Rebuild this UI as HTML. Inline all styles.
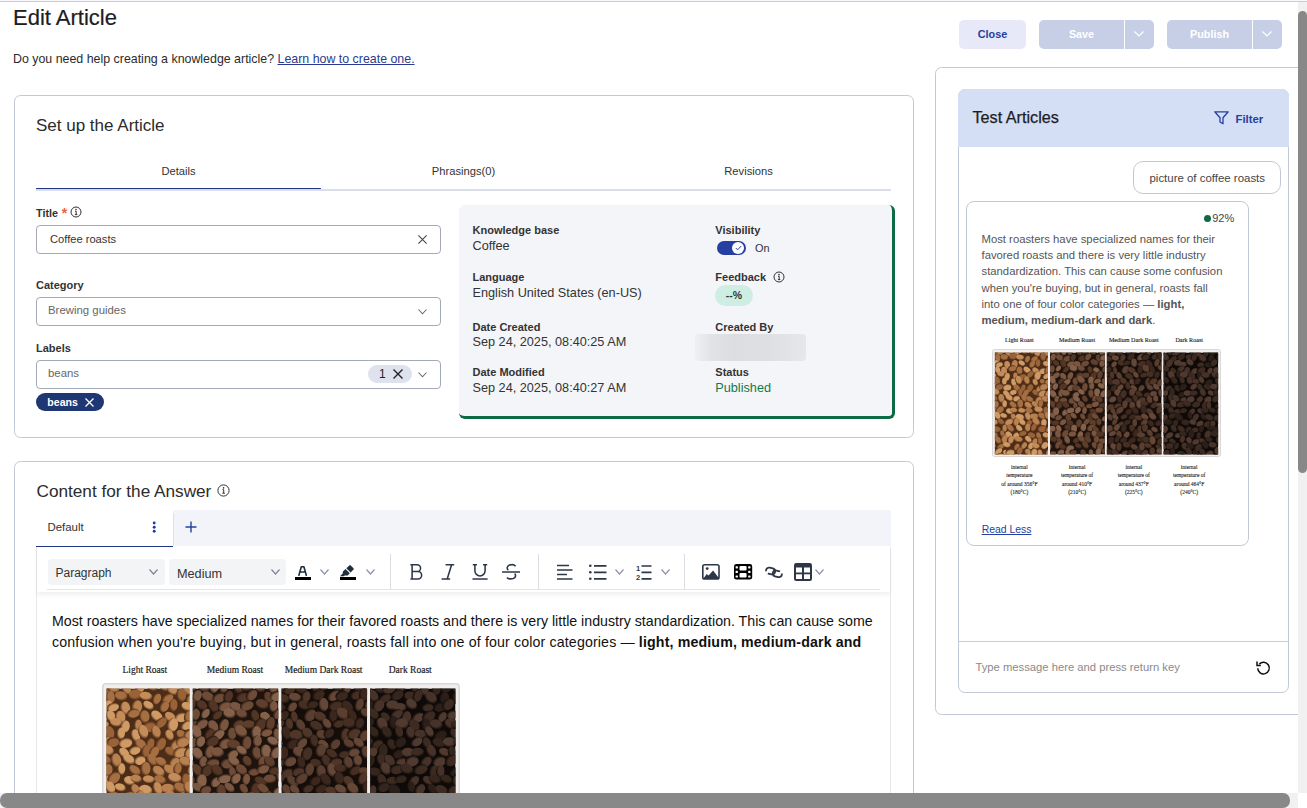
<!DOCTYPE html>
<html><head><meta charset="utf-8">
<style>
*{box-sizing:border-box;margin:0;padding:0}
html,body{width:1307px;height:808px;overflow:hidden;background:#fff;font-family:"Liberation Sans",sans-serif;color:#222}
.a{position:absolute}
.t{position:absolute;line-height:1;white-space:nowrap}
.b{font-weight:bold}
.card{position:absolute;border:1px solid #c3c8d6;border-radius:6.5px;background:#fff}
.inp{position:absolute;border:1px solid #a4a9b6;border-radius:4px;background:#fff}
.btn{position:absolute;top:20px;height:29px;border-radius:5px}
svg{position:absolute;overflow:visible}
</style></head><body>
<svg width="0" height="0" style="position:absolute;left:0;top:0"><defs><g id="coffee"><defs><radialGradient id="gl0" cx="42%" cy="36%" r="64%"><stop offset="0" stop-color="#b8814f"/><stop offset="0.6" stop-color="#b8814f"/><stop offset="1" stop-color="#4e2d18"/></radialGradient><radialGradient id="gl1" cx="42%" cy="36%" r="64%"><stop offset="0" stop-color="#c48c58"/><stop offset="0.6" stop-color="#c48c58"/><stop offset="1" stop-color="#4e2d18"/></radialGradient><radialGradient id="gl2" cx="42%" cy="36%" r="64%"><stop offset="0" stop-color="#a66f41"/><stop offset="0.6" stop-color="#a66f41"/><stop offset="1" stop-color="#4e2d18"/></radialGradient><radialGradient id="gl3" cx="42%" cy="36%" r="64%"><stop offset="0" stop-color="#cf9a64"/><stop offset="0.6" stop-color="#cf9a64"/><stop offset="1" stop-color="#4e2d18"/></radialGradient><radialGradient id="gl4" cx="42%" cy="36%" r="64%"><stop offset="0" stop-color="#996237"/><stop offset="0.6" stop-color="#996237"/><stop offset="1" stop-color="#4e2d18"/></radialGradient><radialGradient id="gm0" cx="42%" cy="36%" r="64%"><stop offset="0" stop-color="#6e4b36"/><stop offset="0.6" stop-color="#6e4b36"/><stop offset="1" stop-color="#1f130d"/></radialGradient><radialGradient id="gm1" cx="42%" cy="36%" r="64%"><stop offset="0" stop-color="#7a5640"/><stop offset="0.6" stop-color="#7a5640"/><stop offset="1" stop-color="#1f130d"/></radialGradient><radialGradient id="gm2" cx="42%" cy="36%" r="64%"><stop offset="0" stop-color="#5f3f2c"/><stop offset="0.6" stop-color="#5f3f2c"/><stop offset="1" stop-color="#1f130d"/></radialGradient><radialGradient id="gm3" cx="42%" cy="36%" r="64%"><stop offset="0" stop-color="#86614a"/><stop offset="0.6" stop-color="#86614a"/><stop offset="1" stop-color="#1f130d"/></radialGradient><radialGradient id="gm4" cx="42%" cy="36%" r="64%"><stop offset="0" stop-color="#523524"/><stop offset="0.6" stop-color="#523524"/><stop offset="1" stop-color="#1f130d"/></radialGradient><radialGradient id="gmd0" cx="42%" cy="36%" r="64%"><stop offset="0" stop-color="#4f3629"/><stop offset="0.6" stop-color="#4f3629"/><stop offset="1" stop-color="#150d09"/></radialGradient><radialGradient id="gmd1" cx="42%" cy="36%" r="64%"><stop offset="0" stop-color="#5a3f31"/><stop offset="0.6" stop-color="#5a3f31"/><stop offset="1" stop-color="#150d09"/></radialGradient><radialGradient id="gmd2" cx="42%" cy="36%" r="64%"><stop offset="0" stop-color="#452e22"/><stop offset="0.6" stop-color="#452e22"/><stop offset="1" stop-color="#150d09"/></radialGradient><radialGradient id="gmd3" cx="42%" cy="36%" r="64%"><stop offset="0" stop-color="#644736"/><stop offset="0.6" stop-color="#644736"/><stop offset="1" stop-color="#150d09"/></radialGradient><radialGradient id="gmd4" cx="42%" cy="36%" r="64%"><stop offset="0" stop-color="#3b271d"/><stop offset="0.6" stop-color="#3b271d"/><stop offset="1" stop-color="#150d09"/></radialGradient><radialGradient id="gd0" cx="42%" cy="36%" r="64%"><stop offset="0" stop-color="#3d2b22"/><stop offset="0.6" stop-color="#3d2b22"/><stop offset="1" stop-color="#0f0a08"/></radialGradient><radialGradient id="gd1" cx="42%" cy="36%" r="64%"><stop offset="0" stop-color="#463228"/><stop offset="0.6" stop-color="#463228"/><stop offset="1" stop-color="#0f0a08"/></radialGradient><radialGradient id="gd2" cx="42%" cy="36%" r="64%"><stop offset="0" stop-color="#34251d"/><stop offset="0.6" stop-color="#34251d"/><stop offset="1" stop-color="#0f0a08"/></radialGradient><radialGradient id="gd3" cx="42%" cy="36%" r="64%"><stop offset="0" stop-color="#50392e"/><stop offset="0.6" stop-color="#50392e"/><stop offset="1" stop-color="#0f0a08"/></radialGradient><radialGradient id="gd4" cx="42%" cy="36%" r="64%"><stop offset="0" stop-color="#2c1f19"/><stop offset="0.6" stop-color="#2c1f19"/><stop offset="1" stop-color="#0f0a08"/></radialGradient></defs><rect x="0.5" y="0.5" width="228" height="107" rx="2" fill="#f0efed" stroke="#d9d8d6" stroke-width="1"/><clipPath id="c0"><rect x="2.8" y="3.5" width="53.2" height="102"/></clipPath><g clip-path="url(#c0)"><rect x="2.8" y="3.5" width="53.2" height="102" fill="#4e2d18"/><ellipse cx="1.7" cy="3.7" rx="4.4" ry="3.5" transform="rotate(166 1.7 3.7)" fill="url(#gl4)"/><ellipse cx="7.0" cy="2.9" rx="4.5" ry="3.4" transform="rotate(40 7.0 2.9)" fill="url(#gl0)"/><ellipse cx="15.6" cy="4.0" rx="4.0" ry="2.7" transform="rotate(63 15.6 4.0)" fill="url(#gl0)"/><ellipse cx="24.3" cy="2.7" rx="3.8" ry="3.0" transform="rotate(99 24.3 2.7)" fill="url(#gl1)"/><ellipse cx="31.8" cy="1.8" rx="4.2" ry="3.0" transform="rotate(33 31.8 1.8)" fill="url(#gl0)"/><ellipse cx="40.0" cy="1.6" rx="4.4" ry="3.5" transform="rotate(42 40.0 1.6)" fill="url(#gl1)"/><ellipse cx="44.9" cy="4.3" rx="4.1" ry="3.1" transform="rotate(52 44.9 4.3)" fill="url(#gl1)"/><ellipse cx="54.7" cy="3.5" rx="4.6" ry="3.6" transform="rotate(76 54.7 3.5)" fill="url(#gl0)"/><ellipse cx="60.0" cy="2.1" rx="3.7" ry="2.5" transform="rotate(77 60.0 2.1)" fill="url(#gl4)"/><ellipse cx="5.3" cy="9.2" rx="4.3" ry="2.9" transform="rotate(90 5.3 9.2)" fill="url(#gl2)"/><ellipse cx="12.3" cy="8.4" rx="4.1" ry="3.1" transform="rotate(14 12.3 8.4)" fill="url(#gl2)"/><ellipse cx="21.5" cy="7.6" rx="4.3" ry="3.4" transform="rotate(4 21.5 7.6)" fill="url(#gl4)"/><ellipse cx="28.2" cy="8.5" rx="4.2" ry="2.8" transform="rotate(11 28.2 8.5)" fill="url(#gl1)"/><ellipse cx="35.0" cy="10.2" rx="3.7" ry="2.6" transform="rotate(118 35.0 10.2)" fill="url(#gl2)"/><ellipse cx="42.0" cy="10.0" rx="3.9" ry="2.8" transform="rotate(150 42.0 10.0)" fill="url(#gl2)"/><ellipse cx="50.7" cy="7.6" rx="4.5" ry="3.1" transform="rotate(87 50.7 7.6)" fill="url(#gl4)"/><ellipse cx="57.2" cy="10.1" rx="3.9" ry="3.1" transform="rotate(139 57.2 10.1)" fill="url(#gl0)"/><ellipse cx="63.5" cy="8.4" rx="3.8" ry="2.5" transform="rotate(38 63.5 8.4)" fill="url(#gl2)"/><ellipse cx="3.1" cy="13.9" rx="3.6" ry="2.9" transform="rotate(136 3.1 13.9)" fill="url(#gl3)"/><ellipse cx="7.0" cy="15.5" rx="3.9" ry="2.7" transform="rotate(166 7.0 15.5)" fill="url(#gl3)"/><ellipse cx="14.8" cy="16.1" rx="4.2" ry="3.3" transform="rotate(85 14.8 16.1)" fill="url(#gl1)"/><ellipse cx="22.2" cy="15.4" rx="4.5" ry="3.4" transform="rotate(105 22.2 15.4)" fill="url(#gl0)"/><ellipse cx="29.7" cy="14.4" rx="3.7" ry="2.6" transform="rotate(36 29.7 14.4)" fill="url(#gl3)"/><ellipse cx="39.8" cy="15.1" rx="3.8" ry="2.8" transform="rotate(124 39.8 15.1)" fill="url(#gl2)"/><ellipse cx="45.6" cy="14.2" rx="4.0" ry="2.7" transform="rotate(96 45.6 14.2)" fill="url(#gl4)"/><ellipse cx="54.8" cy="15.2" rx="4.1" ry="2.9" transform="rotate(22 54.8 15.2)" fill="url(#gl3)"/><ellipse cx="59.7" cy="15.6" rx="4.5" ry="3.2" transform="rotate(91 59.7 15.6)" fill="url(#gl4)"/><ellipse cx="5.6" cy="21.4" rx="4.0" ry="3.0" transform="rotate(71 5.6 21.4)" fill="url(#gl3)"/><ellipse cx="11.6" cy="22.0" rx="4.3" ry="3.4" transform="rotate(87 11.6 22.0)" fill="url(#gl1)"/><ellipse cx="20.1" cy="19.3" rx="4.1" ry="2.9" transform="rotate(171 20.1 19.3)" fill="url(#gl2)"/><ellipse cx="27.1" cy="21.6" rx="4.2" ry="3.3" transform="rotate(89 27.1 21.6)" fill="url(#gl2)"/><ellipse cx="35.1" cy="21.4" rx="4.4" ry="3.1" transform="rotate(44 35.1 21.4)" fill="url(#gl3)"/><ellipse cx="43.7" cy="22.0" rx="4.1" ry="3.0" transform="rotate(42 43.7 22.0)" fill="url(#gl1)"/><ellipse cx="50.6" cy="21.9" rx="4.1" ry="3.1" transform="rotate(171 50.6 21.9)" fill="url(#gl3)"/><ellipse cx="55.6" cy="21.5" rx="4.2" ry="3.1" transform="rotate(107 55.6 21.5)" fill="url(#gl2)"/><ellipse cx="64.6" cy="21.5" rx="4.2" ry="3.2" transform="rotate(7 64.6 21.5)" fill="url(#gl1)"/><ellipse cx="0.1" cy="26.4" rx="4.3" ry="2.9" transform="rotate(175 0.1 26.4)" fill="url(#gl1)"/><ellipse cx="9.2" cy="25.3" rx="4.1" ry="2.8" transform="rotate(13 9.2 25.3)" fill="url(#gl1)"/><ellipse cx="14.7" cy="27.9" rx="4.1" ry="3.0" transform="rotate(106 14.7 27.9)" fill="url(#gl3)"/><ellipse cx="23.0" cy="27.1" rx="3.7" ry="2.5" transform="rotate(95 23.0 27.1)" fill="url(#gl0)"/><ellipse cx="30.4" cy="27.9" rx="4.5" ry="3.5" transform="rotate(176 30.4 27.9)" fill="url(#gl4)"/><ellipse cx="37.8" cy="25.3" rx="4.2" ry="2.8" transform="rotate(139 37.8 25.3)" fill="url(#gl4)"/><ellipse cx="45.1" cy="26.8" rx="4.6" ry="3.5" transform="rotate(107 45.1 26.8)" fill="url(#gl3)"/><ellipse cx="54.2" cy="27.0" rx="4.0" ry="2.7" transform="rotate(152 54.2 27.0)" fill="url(#gl3)"/><ellipse cx="60.7" cy="27.9" rx="4.6" ry="3.4" transform="rotate(89 60.7 27.9)" fill="url(#gl0)"/><ellipse cx="4.6" cy="32.0" rx="4.5" ry="3.3" transform="rotate(83 4.6 32.0)" fill="url(#gl4)"/><ellipse cx="12.0" cy="32.3" rx="3.8" ry="2.7" transform="rotate(97 12.0 32.3)" fill="url(#gl3)"/><ellipse cx="21.5" cy="33.7" rx="4.2" ry="2.9" transform="rotate(77 21.5 33.7)" fill="url(#gl3)"/><ellipse cx="26.3" cy="31.2" rx="4.5" ry="3.2" transform="rotate(73 26.3 31.2)" fill="url(#gl1)"/><ellipse cx="34.5" cy="31.4" rx="4.2" ry="3.0" transform="rotate(75 34.5 31.4)" fill="url(#gl0)"/><ellipse cx="43.0" cy="33.4" rx="3.6" ry="2.7" transform="rotate(70 43.0 33.4)" fill="url(#gl1)"/><ellipse cx="51.0" cy="33.3" rx="3.8" ry="2.7" transform="rotate(39 51.0 33.3)" fill="url(#gl2)"/><ellipse cx="56.1" cy="32.8" rx="4.1" ry="3.1" transform="rotate(154 56.1 32.8)" fill="url(#gl0)"/><ellipse cx="62.5" cy="31.5" rx="3.9" ry="2.9" transform="rotate(157 62.5 31.5)" fill="url(#gl2)"/><ellipse cx="2.1" cy="37.1" rx="3.9" ry="3.0" transform="rotate(151 2.1 37.1)" fill="url(#gl1)"/><ellipse cx="7.0" cy="37.7" rx="4.1" ry="3.2" transform="rotate(175 7.0 37.7)" fill="url(#gl4)"/><ellipse cx="15.0" cy="38.2" rx="4.4" ry="3.3" transform="rotate(176 15.0 38.2)" fill="url(#gl3)"/><ellipse cx="24.8" cy="39.4" rx="4.1" ry="3.1" transform="rotate(50 24.8 39.4)" fill="url(#gl2)"/><ellipse cx="30.8" cy="39.1" rx="3.9" ry="2.6" transform="rotate(110 30.8 39.1)" fill="url(#gl4)"/><ellipse cx="37.5" cy="39.2" rx="4.5" ry="3.1" transform="rotate(122 37.5 39.2)" fill="url(#gl4)"/><ellipse cx="47.1" cy="39.7" rx="4.1" ry="3.0" transform="rotate(138 47.1 39.7)" fill="url(#gl0)"/><ellipse cx="51.5" cy="37.6" rx="4.4" ry="3.4" transform="rotate(169 51.5 37.6)" fill="url(#gl0)"/><ellipse cx="59.9" cy="38.2" rx="3.7" ry="2.6" transform="rotate(124 59.9 38.2)" fill="url(#gl0)"/><ellipse cx="3.6" cy="43.2" rx="4.2" ry="3.3" transform="rotate(28 3.6 43.2)" fill="url(#gl1)"/><ellipse cx="14.2" cy="44.9" rx="4.0" ry="2.8" transform="rotate(47 14.2 44.9)" fill="url(#gl3)"/><ellipse cx="20.9" cy="43.1" rx="3.8" ry="2.8" transform="rotate(169 20.9 43.1)" fill="url(#gl3)"/><ellipse cx="28.1" cy="43.7" rx="4.2" ry="2.8" transform="rotate(102 28.1 43.7)" fill="url(#gl4)"/><ellipse cx="33.3" cy="44.1" rx="3.9" ry="2.9" transform="rotate(125 33.3 44.1)" fill="url(#gl2)"/><ellipse cx="43.6" cy="43.9" rx="3.7" ry="2.8" transform="rotate(38 43.6 43.9)" fill="url(#gl4)"/><ellipse cx="49.9" cy="44.3" rx="4.5" ry="3.3" transform="rotate(158 49.9 44.3)" fill="url(#gl1)"/><ellipse cx="55.9" cy="44.4" rx="3.9" ry="2.9" transform="rotate(132 55.9 44.4)" fill="url(#gl1)"/><ellipse cx="65.3" cy="45.3" rx="4.1" ry="2.9" transform="rotate(33 65.3 45.3)" fill="url(#gl0)"/><ellipse cx="1.9" cy="49.0" rx="4.3" ry="2.9" transform="rotate(31 1.9 49.0)" fill="url(#gl4)"/><ellipse cx="9.0" cy="49.5" rx="4.5" ry="3.3" transform="rotate(82 9.0 49.5)" fill="url(#gl0)"/><ellipse cx="17.2" cy="48.9" rx="4.3" ry="2.9" transform="rotate(38 17.2 48.9)" fill="url(#gl3)"/><ellipse cx="24.2" cy="49.4" rx="3.7" ry="3.0" transform="rotate(170 24.2 49.4)" fill="url(#gl3)"/><ellipse cx="32.1" cy="49.2" rx="4.2" ry="3.0" transform="rotate(60 32.1 49.2)" fill="url(#gl2)"/><ellipse cx="37.7" cy="50.5" rx="3.9" ry="2.8" transform="rotate(34 37.7 50.5)" fill="url(#gl2)"/><ellipse cx="46.2" cy="51.1" rx="4.0" ry="3.1" transform="rotate(132 46.2 51.1)" fill="url(#gl0)"/><ellipse cx="53.4" cy="50.4" rx="4.3" ry="3.1" transform="rotate(24 53.4 50.4)" fill="url(#gl0)"/><ellipse cx="58.8" cy="49.4" rx="3.6" ry="2.9" transform="rotate(123 58.8 49.4)" fill="url(#gl2)"/><ellipse cx="3.2" cy="56.0" rx="4.5" ry="3.4" transform="rotate(109 3.2 56.0)" fill="url(#gl2)"/><ellipse cx="12.3" cy="55.0" rx="3.8" ry="2.6" transform="rotate(95 12.3 55.0)" fill="url(#gl3)"/><ellipse cx="21.1" cy="56.0" rx="4.2" ry="2.8" transform="rotate(41 21.1 56.0)" fill="url(#gl2)"/><ellipse cx="27.8" cy="54.8" rx="4.5" ry="3.2" transform="rotate(94 27.8 54.8)" fill="url(#gl2)"/><ellipse cx="36.2" cy="56.6" rx="4.3" ry="3.1" transform="rotate(39 36.2 56.6)" fill="url(#gl0)"/><ellipse cx="43.0" cy="55.6" rx="4.1" ry="2.8" transform="rotate(41 43.0 55.6)" fill="url(#gl0)"/><ellipse cx="48.3" cy="54.8" rx="3.8" ry="2.6" transform="rotate(102 48.3 54.8)" fill="url(#gl2)"/><ellipse cx="57.4" cy="55.2" rx="4.0" ry="2.7" transform="rotate(119 57.4 55.2)" fill="url(#gl1)"/><ellipse cx="65.2" cy="55.2" rx="3.8" ry="2.5" transform="rotate(155 65.2 55.2)" fill="url(#gl3)"/><ellipse cx="2.1" cy="61.4" rx="4.1" ry="2.9" transform="rotate(174 2.1 61.4)" fill="url(#gl3)"/><ellipse cx="7.5" cy="60.7" rx="4.4" ry="3.4" transform="rotate(144 7.5 60.7)" fill="url(#gl2)"/><ellipse cx="17.7" cy="62.6" rx="3.8" ry="3.0" transform="rotate(23 17.7 62.6)" fill="url(#gl3)"/><ellipse cx="21.9" cy="61.3" rx="3.7" ry="2.6" transform="rotate(15 21.9 61.3)" fill="url(#gl0)"/><ellipse cx="30.0" cy="61.7" rx="3.9" ry="2.6" transform="rotate(9 30.0 61.7)" fill="url(#gl1)"/><ellipse cx="37.1" cy="62.0" rx="4.0" ry="2.9" transform="rotate(21 37.1 62.0)" fill="url(#gl2)"/><ellipse cx="46.7" cy="60.8" rx="4.6" ry="3.1" transform="rotate(19 46.7 60.8)" fill="url(#gl1)"/><ellipse cx="53.5" cy="61.8" rx="4.0" ry="2.8" transform="rotate(96 53.5 61.8)" fill="url(#gl4)"/><ellipse cx="61.0" cy="62.6" rx="4.5" ry="3.2" transform="rotate(114 61.0 62.6)" fill="url(#gl1)"/><ellipse cx="5.2" cy="66.9" rx="4.1" ry="3.1" transform="rotate(67 5.2 66.9)" fill="url(#gl3)"/><ellipse cx="11.7" cy="66.9" rx="3.7" ry="2.6" transform="rotate(21 11.7 66.9)" fill="url(#gl3)"/><ellipse cx="21.5" cy="68.4" rx="3.9" ry="2.8" transform="rotate(63 21.5 68.4)" fill="url(#gl0)"/><ellipse cx="27.9" cy="68.7" rx="4.5" ry="3.5" transform="rotate(18 27.9 68.7)" fill="url(#gl3)"/><ellipse cx="35.6" cy="67.6" rx="4.4" ry="2.9" transform="rotate(73 35.6 67.6)" fill="url(#gl1)"/><ellipse cx="42.3" cy="67.7" rx="4.4" ry="3.3" transform="rotate(4 42.3 67.7)" fill="url(#gl0)"/><ellipse cx="50.1" cy="67.2" rx="4.4" ry="3.1" transform="rotate(33 50.1 67.2)" fill="url(#gl2)"/><ellipse cx="55.2" cy="67.0" rx="3.9" ry="2.9" transform="rotate(73 55.2 67.0)" fill="url(#gl0)"/><ellipse cx="62.6" cy="68.6" rx="4.2" ry="2.8" transform="rotate(12 62.6 68.6)" fill="url(#gl1)"/><ellipse cx="2.5" cy="73.6" rx="3.9" ry="3.1" transform="rotate(4 2.5 73.6)" fill="url(#gl1)"/><ellipse cx="8.8" cy="72.8" rx="3.8" ry="2.7" transform="rotate(41 8.8 72.8)" fill="url(#gl4)"/><ellipse cx="16.5" cy="72.9" rx="4.6" ry="3.2" transform="rotate(155 16.5 72.9)" fill="url(#gl1)"/><ellipse cx="24.0" cy="72.8" rx="4.4" ry="3.1" transform="rotate(109 24.0 72.8)" fill="url(#gl0)"/><ellipse cx="30.3" cy="73.6" rx="3.8" ry="2.8" transform="rotate(43 30.3 73.6)" fill="url(#gl3)"/><ellipse cx="36.7" cy="74.3" rx="3.8" ry="2.7" transform="rotate(125 36.7 74.3)" fill="url(#gl4)"/><ellipse cx="43.9" cy="72.8" rx="4.5" ry="3.4" transform="rotate(53 43.9 72.8)" fill="url(#gl0)"/><ellipse cx="51.4" cy="74.0" rx="4.1" ry="3.2" transform="rotate(100 51.4 74.0)" fill="url(#gl3)"/><ellipse cx="59.5" cy="73.2" rx="3.8" ry="2.8" transform="rotate(91 59.5 73.2)" fill="url(#gl1)"/><ellipse cx="4.5" cy="80.6" rx="4.4" ry="3.3" transform="rotate(15 4.5 80.6)" fill="url(#gl4)"/><ellipse cx="12.4" cy="79.3" rx="3.7" ry="2.6" transform="rotate(97 12.4 79.3)" fill="url(#gl0)"/><ellipse cx="18.3" cy="79.4" rx="4.4" ry="3.0" transform="rotate(51 18.3 79.4)" fill="url(#gl2)"/><ellipse cx="27.1" cy="79.6" rx="4.1" ry="2.8" transform="rotate(50 27.1 79.6)" fill="url(#gl3)"/><ellipse cx="35.3" cy="78.6" rx="4.2" ry="3.1" transform="rotate(99 35.3 78.6)" fill="url(#gl0)"/><ellipse cx="41.3" cy="78.4" rx="3.9" ry="2.8" transform="rotate(121 41.3 78.4)" fill="url(#gl4)"/><ellipse cx="50.1" cy="79.4" rx="4.6" ry="3.5" transform="rotate(177 50.1 79.4)" fill="url(#gl4)"/><ellipse cx="57.4" cy="79.8" rx="4.4" ry="3.1" transform="rotate(151 57.4 79.8)" fill="url(#gl0)"/><ellipse cx="64.8" cy="79.8" rx="3.9" ry="2.6" transform="rotate(22 64.8 79.8)" fill="url(#gl2)"/><ellipse cx="1.7" cy="86.6" rx="4.5" ry="3.3" transform="rotate(3 1.7 86.6)" fill="url(#gl2)"/><ellipse cx="10.2" cy="84.9" rx="3.6" ry="2.4" transform="rotate(76 10.2 84.9)" fill="url(#gl2)"/><ellipse cx="16.8" cy="86.5" rx="4.3" ry="3.2" transform="rotate(53 16.8 86.5)" fill="url(#gl3)"/><ellipse cx="23.6" cy="86.7" rx="3.8" ry="3.1" transform="rotate(139 23.6 86.7)" fill="url(#gl3)"/><ellipse cx="30.5" cy="84.2" rx="4.0" ry="2.7" transform="rotate(167 30.5 84.2)" fill="url(#gl4)"/><ellipse cx="39.7" cy="86.7" rx="4.2" ry="3.0" transform="rotate(27 39.7 86.7)" fill="url(#gl4)"/><ellipse cx="46.4" cy="87.0" rx="3.8" ry="2.6" transform="rotate(75 46.4 87.0)" fill="url(#gl2)"/><ellipse cx="54.2" cy="86.4" rx="3.7" ry="2.9" transform="rotate(19 54.2 86.4)" fill="url(#gl3)"/><ellipse cx="61.5" cy="84.8" rx="3.7" ry="2.7" transform="rotate(163 61.5 84.8)" fill="url(#gl4)"/><ellipse cx="5.8" cy="91.3" rx="4.0" ry="3.0" transform="rotate(62 5.8 91.3)" fill="url(#gl2)"/><ellipse cx="12.1" cy="90.3" rx="4.5" ry="3.2" transform="rotate(107 12.1 90.3)" fill="url(#gl0)"/><ellipse cx="18.5" cy="90.9" rx="4.2" ry="3.1" transform="rotate(111 18.5 90.9)" fill="url(#gl1)"/><ellipse cx="26.6" cy="90.4" rx="4.4" ry="3.1" transform="rotate(19 26.6 90.4)" fill="url(#gl0)"/><ellipse cx="36.2" cy="90.5" rx="4.1" ry="2.8" transform="rotate(48 36.2 90.5)" fill="url(#gl3)"/><ellipse cx="42.5" cy="92.7" rx="3.8" ry="2.9" transform="rotate(122 42.5 92.7)" fill="url(#gl0)"/><ellipse cx="47.6" cy="92.0" rx="3.7" ry="2.6" transform="rotate(94 47.6 92.0)" fill="url(#gl4)"/><ellipse cx="57.7" cy="91.7" rx="4.0" ry="2.8" transform="rotate(46 57.7 91.7)" fill="url(#gl4)"/><ellipse cx="65.8" cy="91.9" rx="4.6" ry="3.1" transform="rotate(26 65.8 91.9)" fill="url(#gl0)"/><ellipse cx="0.2" cy="96.9" rx="3.8" ry="3.0" transform="rotate(21 0.2 96.9)" fill="url(#gl1)"/><ellipse cx="8.4" cy="97.5" rx="4.0" ry="2.7" transform="rotate(152 8.4 97.5)" fill="url(#gl2)"/><ellipse cx="14.8" cy="96.0" rx="4.0" ry="2.8" transform="rotate(18 14.8 96.0)" fill="url(#gl3)"/><ellipse cx="24.4" cy="98.0" rx="3.9" ry="2.6" transform="rotate(122 24.4 98.0)" fill="url(#gl2)"/><ellipse cx="31.8" cy="96.5" rx="3.9" ry="2.7" transform="rotate(127 31.8 96.5)" fill="url(#gl0)"/><ellipse cx="38.6" cy="96.8" rx="3.9" ry="3.1" transform="rotate(132 38.6 96.8)" fill="url(#gl3)"/><ellipse cx="44.1" cy="97.2" rx="3.8" ry="2.9" transform="rotate(18 44.1 97.2)" fill="url(#gl1)"/><ellipse cx="52.3" cy="96.3" rx="4.1" ry="3.3" transform="rotate(138 52.3 96.3)" fill="url(#gl3)"/><ellipse cx="61.8" cy="96.7" rx="4.1" ry="2.7" transform="rotate(21 61.8 96.7)" fill="url(#gl0)"/><ellipse cx="6.1" cy="102.3" rx="4.4" ry="2.9" transform="rotate(143 6.1 102.3)" fill="url(#gl3)"/><ellipse cx="14.0" cy="104.3" rx="3.7" ry="2.9" transform="rotate(49 14.0 104.3)" fill="url(#gl3)"/><ellipse cx="18.0" cy="103.4" rx="4.6" ry="3.4" transform="rotate(175 18.0 103.4)" fill="url(#gl3)"/><ellipse cx="27.2" cy="102.0" rx="4.0" ry="3.1" transform="rotate(111 27.2 102.0)" fill="url(#gl4)"/><ellipse cx="36.2" cy="103.8" rx="4.2" ry="3.1" transform="rotate(55 36.2 103.8)" fill="url(#gl0)"/><ellipse cx="41.7" cy="103.9" rx="4.4" ry="3.4" transform="rotate(110 41.7 103.9)" fill="url(#gl3)"/><ellipse cx="47.7" cy="104.2" rx="3.8" ry="2.7" transform="rotate(77 47.7 104.2)" fill="url(#gl1)"/><ellipse cx="56.5" cy="104.6" rx="4.6" ry="3.2" transform="rotate(107 56.5 104.6)" fill="url(#gl1)"/><ellipse cx="63.4" cy="103.2" rx="3.9" ry="2.9" transform="rotate(31 63.4 103.2)" fill="url(#gl1)"/><ellipse cx="2.2" cy="108.0" rx="4.3" ry="2.9" transform="rotate(104 2.2 108.0)" fill="url(#gl1)"/><ellipse cx="7.6" cy="107.9" rx="4.4" ry="3.5" transform="rotate(153 7.6 107.9)" fill="url(#gl3)"/><ellipse cx="14.8" cy="108.5" rx="4.5" ry="3.6" transform="rotate(7 14.8 108.5)" fill="url(#gl0)"/><ellipse cx="22.4" cy="109.0" rx="3.9" ry="3.0" transform="rotate(95 22.4 109.0)" fill="url(#gl2)"/><ellipse cx="31.9" cy="108.2" rx="4.1" ry="3.3" transform="rotate(179 31.9 108.2)" fill="url(#gl4)"/><ellipse cx="36.8" cy="108.1" rx="4.2" ry="3.0" transform="rotate(94 36.8 108.1)" fill="url(#gl3)"/><ellipse cx="45.9" cy="109.0" rx="4.5" ry="3.6" transform="rotate(35 45.9 109.0)" fill="url(#gl2)"/><ellipse cx="51.4" cy="107.8" rx="4.0" ry="2.8" transform="rotate(170 51.4 107.8)" fill="url(#gl0)"/><ellipse cx="58.7" cy="110.0" rx="4.0" ry="2.9" transform="rotate(156 58.7 110.0)" fill="url(#gl1)"/></g><clipPath id="c1"><rect x="58.0" y="3.5" width="54.9" height="102"/></clipPath><g clip-path="url(#c1)"><rect x="58.0" y="3.5" width="54.9" height="102" fill="#1f130d"/><ellipse cx="57.6" cy="1.8" rx="4.1" ry="2.7" transform="rotate(98 57.6 1.8)" fill="url(#gm2)"/><ellipse cx="64.9" cy="3.2" rx="4.0" ry="2.7" transform="rotate(31 64.9 3.2)" fill="url(#gm2)"/><ellipse cx="71.5" cy="2.4" rx="4.2" ry="3.1" transform="rotate(99 71.5 2.4)" fill="url(#gm3)"/><ellipse cx="78.0" cy="2.1" rx="4.5" ry="3.0" transform="rotate(114 78.0 2.1)" fill="url(#gm0)"/><ellipse cx="87.0" cy="3.1" rx="4.0" ry="3.1" transform="rotate(76 87.0 3.1)" fill="url(#gm4)"/><ellipse cx="93.0" cy="2.7" rx="4.1" ry="2.7" transform="rotate(0 93.0 2.7)" fill="url(#gm4)"/><ellipse cx="101.1" cy="3.2" rx="3.6" ry="2.8" transform="rotate(29 101.1 3.2)" fill="url(#gm2)"/><ellipse cx="109.7" cy="2.6" rx="3.9" ry="3.1" transform="rotate(123 109.7 2.6)" fill="url(#gm1)"/><ellipse cx="116.6" cy="2.3" rx="4.4" ry="3.3" transform="rotate(99 116.6 2.3)" fill="url(#gm1)"/><ellipse cx="60.7" cy="8.2" rx="3.9" ry="3.0" transform="rotate(112 60.7 8.2)" fill="url(#gm1)"/><ellipse cx="67.9" cy="9.1" rx="4.5" ry="3.2" transform="rotate(31 67.9 9.1)" fill="url(#gm0)"/><ellipse cx="74.8" cy="9.4" rx="4.2" ry="3.2" transform="rotate(166 74.8 9.4)" fill="url(#gm0)"/><ellipse cx="80.7" cy="8.7" rx="4.0" ry="2.9" transform="rotate(113 80.7 8.7)" fill="url(#gm4)"/><ellipse cx="90.1" cy="9.0" rx="4.3" ry="3.3" transform="rotate(175 90.1 9.0)" fill="url(#gm4)"/><ellipse cx="95.7" cy="7.7" rx="4.1" ry="3.0" transform="rotate(138 95.7 7.7)" fill="url(#gm0)"/><ellipse cx="106.2" cy="9.4" rx="3.9" ry="2.8" transform="rotate(78 106.2 9.4)" fill="url(#gm2)"/><ellipse cx="111.8" cy="8.3" rx="4.5" ry="3.2" transform="rotate(168 111.8 8.3)" fill="url(#gm3)"/><ellipse cx="119.3" cy="7.9" rx="3.8" ry="2.7" transform="rotate(156 119.3 7.9)" fill="url(#gm1)"/><ellipse cx="56.3" cy="13.8" rx="4.6" ry="3.4" transform="rotate(112 56.3 13.8)" fill="url(#gm4)"/><ellipse cx="64.0" cy="14.5" rx="3.8" ry="3.0" transform="rotate(43 64.0 14.5)" fill="url(#gm4)"/><ellipse cx="71.1" cy="15.0" rx="4.5" ry="3.1" transform="rotate(68 71.1 15.0)" fill="url(#gm4)"/><ellipse cx="78.7" cy="14.9" rx="4.5" ry="3.3" transform="rotate(169 78.7 14.9)" fill="url(#gm1)"/><ellipse cx="85.8" cy="15.6" rx="4.4" ry="3.1" transform="rotate(27 85.8 15.6)" fill="url(#gm1)"/><ellipse cx="92.6" cy="14.4" rx="4.5" ry="3.1" transform="rotate(161 92.6 14.4)" fill="url(#gm0)"/><ellipse cx="102.5" cy="13.7" rx="4.4" ry="3.1" transform="rotate(26 102.5 13.7)" fill="url(#gm2)"/><ellipse cx="109.5" cy="15.0" rx="3.6" ry="2.9" transform="rotate(98 109.5 15.0)" fill="url(#gm1)"/><ellipse cx="116.2" cy="15.4" rx="3.9" ry="2.8" transform="rotate(84 116.2 15.4)" fill="url(#gm0)"/><ellipse cx="59.5" cy="20.1" rx="3.9" ry="3.1" transform="rotate(104 59.5 20.1)" fill="url(#gm0)"/><ellipse cx="66.0" cy="19.5" rx="3.6" ry="2.5" transform="rotate(129 66.0 19.5)" fill="url(#gm3)"/><ellipse cx="73.6" cy="20.5" rx="3.8" ry="2.5" transform="rotate(144 73.6 20.5)" fill="url(#gm4)"/><ellipse cx="81.6" cy="19.6" rx="4.1" ry="3.3" transform="rotate(19 81.6 19.6)" fill="url(#gm3)"/><ellipse cx="89.4" cy="19.8" rx="3.8" ry="2.9" transform="rotate(24 89.4 19.8)" fill="url(#gm0)"/><ellipse cx="97.8" cy="21.2" rx="4.0" ry="2.7" transform="rotate(78 97.8 21.2)" fill="url(#gm4)"/><ellipse cx="104.4" cy="21.6" rx="3.6" ry="2.9" transform="rotate(34 104.4 21.6)" fill="url(#gm3)"/><ellipse cx="112.6" cy="19.8" rx="3.8" ry="3.0" transform="rotate(135 112.6 19.8)" fill="url(#gm0)"/><ellipse cx="118.1" cy="19.5" rx="4.5" ry="3.3" transform="rotate(113 118.1 19.5)" fill="url(#gm4)"/><ellipse cx="58.0" cy="26.8" rx="4.1" ry="2.9" transform="rotate(160 58.0 26.8)" fill="url(#gm2)"/><ellipse cx="63.7" cy="26.3" rx="4.3" ry="2.9" transform="rotate(152 63.7 26.3)" fill="url(#gm1)"/><ellipse cx="71.1" cy="27.9" rx="4.4" ry="3.2" transform="rotate(59 71.1 27.9)" fill="url(#gm1)"/><ellipse cx="77.8" cy="27.0" rx="4.3" ry="3.0" transform="rotate(118 77.8 27.0)" fill="url(#gm1)"/><ellipse cx="87.2" cy="26.5" rx="3.9" ry="3.1" transform="rotate(160 87.2 26.5)" fill="url(#gm2)"/><ellipse cx="94.2" cy="26.7" rx="4.2" ry="2.9" transform="rotate(6 94.2 26.7)" fill="url(#gm2)"/><ellipse cx="101.2" cy="26.5" rx="4.4" ry="3.5" transform="rotate(133 101.2 26.5)" fill="url(#gm4)"/><ellipse cx="107.5" cy="26.1" rx="4.5" ry="3.0" transform="rotate(107 107.5 26.1)" fill="url(#gm2)"/><ellipse cx="115.4" cy="27.9" rx="3.7" ry="2.8" transform="rotate(8 115.4 27.9)" fill="url(#gm0)"/><ellipse cx="60.2" cy="31.5" rx="4.6" ry="3.3" transform="rotate(72 60.2 31.5)" fill="url(#gm3)"/><ellipse cx="68.8" cy="32.8" rx="4.1" ry="3.2" transform="rotate(134 68.8 32.8)" fill="url(#gm4)"/><ellipse cx="74.4" cy="33.0" rx="4.4" ry="2.9" transform="rotate(147 74.4 33.0)" fill="url(#gm3)"/><ellipse cx="82.9" cy="32.6" rx="4.1" ry="3.0" transform="rotate(95 82.9 32.6)" fill="url(#gm0)"/><ellipse cx="88.8" cy="31.1" rx="4.6" ry="3.5" transform="rotate(43 88.8 31.1)" fill="url(#gm1)"/><ellipse cx="98.5" cy="31.8" rx="4.4" ry="3.3" transform="rotate(98 98.5 31.8)" fill="url(#gm3)"/><ellipse cx="105.1" cy="31.7" rx="3.9" ry="2.6" transform="rotate(168 105.1 31.7)" fill="url(#gm1)"/><ellipse cx="112.3" cy="33.2" rx="4.1" ry="3.0" transform="rotate(78 112.3 33.2)" fill="url(#gm1)"/><ellipse cx="120.2" cy="32.1" rx="4.2" ry="3.2" transform="rotate(113 120.2 32.1)" fill="url(#gm0)"/><ellipse cx="57.9" cy="38.5" rx="3.6" ry="2.6" transform="rotate(118 57.9 38.5)" fill="url(#gm0)"/><ellipse cx="62.8" cy="37.5" rx="3.8" ry="3.0" transform="rotate(120 62.8 37.5)" fill="url(#gm3)"/><ellipse cx="70.5" cy="37.2" rx="4.4" ry="3.3" transform="rotate(156 70.5 37.2)" fill="url(#gm4)"/><ellipse cx="78.6" cy="38.7" rx="4.2" ry="3.3" transform="rotate(158 78.6 38.7)" fill="url(#gm1)"/><ellipse cx="84.4" cy="39.5" rx="4.6" ry="3.2" transform="rotate(16 84.4 39.5)" fill="url(#gm2)"/><ellipse cx="92.4" cy="38.5" rx="4.5" ry="3.1" transform="rotate(101 92.4 38.5)" fill="url(#gm0)"/><ellipse cx="99.2" cy="37.2" rx="3.8" ry="3.0" transform="rotate(100 99.2 37.2)" fill="url(#gm1)"/><ellipse cx="109.3" cy="37.3" rx="4.0" ry="2.7" transform="rotate(33 109.3 37.3)" fill="url(#gm3)"/><ellipse cx="117.1" cy="37.4" rx="4.6" ry="3.2" transform="rotate(134 117.1 37.4)" fill="url(#gm1)"/><ellipse cx="60.9" cy="45.3" rx="4.3" ry="3.3" transform="rotate(59 60.9 45.3)" fill="url(#gm3)"/><ellipse cx="68.7" cy="44.1" rx="4.3" ry="3.2" transform="rotate(113 68.7 44.1)" fill="url(#gm1)"/><ellipse cx="73.9" cy="44.5" rx="4.3" ry="3.4" transform="rotate(11 73.9 44.5)" fill="url(#gm1)"/><ellipse cx="83.6" cy="45.6" rx="3.8" ry="2.8" transform="rotate(155 83.6 45.6)" fill="url(#gm3)"/><ellipse cx="89.3" cy="43.3" rx="3.9" ry="2.6" transform="rotate(38 89.3 43.3)" fill="url(#gm3)"/><ellipse cx="98.8" cy="45.0" rx="4.3" ry="3.1" transform="rotate(83 98.8 45.0)" fill="url(#gm0)"/><ellipse cx="104.6" cy="43.9" rx="4.6" ry="3.5" transform="rotate(94 104.6 43.9)" fill="url(#gm3)"/><ellipse cx="111.2" cy="44.5" rx="4.5" ry="3.2" transform="rotate(137 111.2 44.5)" fill="url(#gm3)"/><ellipse cx="118.2" cy="44.1" rx="4.0" ry="3.1" transform="rotate(58 118.2 44.1)" fill="url(#gm3)"/><ellipse cx="55.8" cy="51.1" rx="3.7" ry="2.7" transform="rotate(56 55.8 51.1)" fill="url(#gm0)"/><ellipse cx="64.5" cy="50.5" rx="3.7" ry="2.8" transform="rotate(104 64.5 50.5)" fill="url(#gm1)"/><ellipse cx="70.7" cy="51.2" rx="4.4" ry="3.1" transform="rotate(173 70.7 51.2)" fill="url(#gm0)"/><ellipse cx="80.2" cy="51.3" rx="4.4" ry="3.4" transform="rotate(174 80.2 51.3)" fill="url(#gm0)"/><ellipse cx="84.4" cy="50.2" rx="4.1" ry="2.9" transform="rotate(38 84.4 50.2)" fill="url(#gm3)"/><ellipse cx="92.7" cy="50.1" rx="3.7" ry="2.8" transform="rotate(62 92.7 50.1)" fill="url(#gm2)"/><ellipse cx="102.1" cy="50.5" rx="3.7" ry="2.6" transform="rotate(105 102.1 50.5)" fill="url(#gm0)"/><ellipse cx="107.1" cy="50.6" rx="4.0" ry="3.2" transform="rotate(53 107.1 50.6)" fill="url(#gm2)"/><ellipse cx="116.4" cy="50.1" rx="3.7" ry="2.9" transform="rotate(83 116.4 50.1)" fill="url(#gm0)"/><ellipse cx="60.9" cy="56.0" rx="4.5" ry="3.0" transform="rotate(58 60.9 56.0)" fill="url(#gm2)"/><ellipse cx="66.9" cy="56.0" rx="4.5" ry="3.3" transform="rotate(131 66.9 56.0)" fill="url(#gm4)"/><ellipse cx="73.5" cy="56.1" rx="4.5" ry="3.2" transform="rotate(50 73.5 56.1)" fill="url(#gm4)"/><ellipse cx="83.2" cy="57.3" rx="3.7" ry="2.5" transform="rotate(82 83.2 57.3)" fill="url(#gm0)"/><ellipse cx="89.1" cy="55.7" rx="4.2" ry="3.1" transform="rotate(44 89.1 55.7)" fill="url(#gm0)"/><ellipse cx="97.0" cy="56.8" rx="3.6" ry="2.5" transform="rotate(179 97.0 56.8)" fill="url(#gm0)"/><ellipse cx="103.0" cy="54.9" rx="4.2" ry="3.0" transform="rotate(168 103.0 54.9)" fill="url(#gm1)"/><ellipse cx="110.3" cy="56.0" rx="3.8" ry="2.7" transform="rotate(177 110.3 56.0)" fill="url(#gm4)"/><ellipse cx="119.6" cy="55.8" rx="4.1" ry="2.9" transform="rotate(9 119.6 55.8)" fill="url(#gm1)"/><ellipse cx="56.0" cy="63.4" rx="4.4" ry="3.0" transform="rotate(112 56.0 63.4)" fill="url(#gm2)"/><ellipse cx="63.4" cy="62.8" rx="4.5" ry="3.6" transform="rotate(99 63.4 62.8)" fill="url(#gm3)"/><ellipse cx="72.6" cy="63.4" rx="3.7" ry="2.9" transform="rotate(138 72.6 63.4)" fill="url(#gm3)"/><ellipse cx="78.2" cy="61.1" rx="4.6" ry="3.0" transform="rotate(174 78.2 61.1)" fill="url(#gm3)"/><ellipse cx="85.4" cy="61.1" rx="3.8" ry="3.0" transform="rotate(132 85.4 61.1)" fill="url(#gm3)"/><ellipse cx="92.1" cy="61.7" rx="3.8" ry="2.6" transform="rotate(103 92.1 61.7)" fill="url(#gm1)"/><ellipse cx="101.6" cy="63.1" rx="4.3" ry="2.8" transform="rotate(29 101.6 63.1)" fill="url(#gm4)"/><ellipse cx="107.6" cy="61.5" rx="4.2" ry="2.9" transform="rotate(3 107.6 61.5)" fill="url(#gm0)"/><ellipse cx="114.6" cy="60.7" rx="4.1" ry="2.8" transform="rotate(57 114.6 60.7)" fill="url(#gm2)"/><ellipse cx="61.2" cy="67.1" rx="4.1" ry="2.7" transform="rotate(31 61.2 67.1)" fill="url(#gm1)"/><ellipse cx="66.2" cy="68.4" rx="3.7" ry="2.9" transform="rotate(162 66.2 68.4)" fill="url(#gm0)"/><ellipse cx="76.0" cy="69.0" rx="4.2" ry="3.3" transform="rotate(89 76.0 69.0)" fill="url(#gm2)"/><ellipse cx="81.5" cy="67.0" rx="3.9" ry="2.6" transform="rotate(44 81.5 67.0)" fill="url(#gm1)"/><ellipse cx="90.6" cy="67.9" rx="3.6" ry="2.5" transform="rotate(59 90.6 67.9)" fill="url(#gm0)"/><ellipse cx="98.0" cy="68.5" rx="4.5" ry="3.3" transform="rotate(98 98.0 68.5)" fill="url(#gm4)"/><ellipse cx="103.1" cy="67.9" rx="4.3" ry="2.8" transform="rotate(37 103.1 67.9)" fill="url(#gm0)"/><ellipse cx="112.9" cy="69.1" rx="3.9" ry="2.7" transform="rotate(157 112.9 69.1)" fill="url(#gm3)"/><ellipse cx="117.6" cy="68.5" rx="3.6" ry="2.9" transform="rotate(133 117.6 68.5)" fill="url(#gm3)"/><ellipse cx="56.0" cy="73.1" rx="3.8" ry="3.0" transform="rotate(149 56.0 73.1)" fill="url(#gm2)"/><ellipse cx="63.7" cy="74.3" rx="4.2" ry="2.9" transform="rotate(1 63.7 74.3)" fill="url(#gm4)"/><ellipse cx="70.6" cy="73.0" rx="3.8" ry="2.9" transform="rotate(149 70.6 73.0)" fill="url(#gm1)"/><ellipse cx="77.9" cy="74.4" rx="3.8" ry="3.0" transform="rotate(30 77.9 74.4)" fill="url(#gm4)"/><ellipse cx="86.4" cy="74.4" rx="4.3" ry="3.2" transform="rotate(112 86.4 74.4)" fill="url(#gm2)"/><ellipse cx="94.2" cy="72.6" rx="3.8" ry="2.7" transform="rotate(139 94.2 72.6)" fill="url(#gm0)"/><ellipse cx="101.5" cy="74.2" rx="4.2" ry="3.3" transform="rotate(3 101.5 74.2)" fill="url(#gm2)"/><ellipse cx="106.5" cy="72.9" rx="3.8" ry="2.9" transform="rotate(97 106.5 72.9)" fill="url(#gm2)"/><ellipse cx="116.9" cy="74.8" rx="4.2" ry="3.0" transform="rotate(49 116.9 74.8)" fill="url(#gm3)"/><ellipse cx="60.4" cy="80.1" rx="4.3" ry="3.2" transform="rotate(5 60.4 80.1)" fill="url(#gm3)"/><ellipse cx="66.5" cy="79.8" rx="3.8" ry="2.9" transform="rotate(70 66.5 79.8)" fill="url(#gm3)"/><ellipse cx="76.2" cy="79.1" rx="4.2" ry="3.0" transform="rotate(28 76.2 79.1)" fill="url(#gm4)"/><ellipse cx="81.5" cy="80.0" rx="4.5" ry="3.5" transform="rotate(96 81.5 80.0)" fill="url(#gm3)"/><ellipse cx="90.9" cy="78.5" rx="4.0" ry="3.2" transform="rotate(103 90.9 78.5)" fill="url(#gm3)"/><ellipse cx="98.8" cy="78.5" rx="4.6" ry="3.3" transform="rotate(153 98.8 78.5)" fill="url(#gm0)"/><ellipse cx="103.5" cy="80.5" rx="3.9" ry="2.8" transform="rotate(44 103.5 80.5)" fill="url(#gm2)"/><ellipse cx="111.8" cy="80.6" rx="4.3" ry="2.9" transform="rotate(98 111.8 80.6)" fill="url(#gm1)"/><ellipse cx="119.6" cy="80.5" rx="4.3" ry="3.0" transform="rotate(58 119.6 80.5)" fill="url(#gm3)"/><ellipse cx="56.5" cy="85.7" rx="4.3" ry="3.3" transform="rotate(119 56.5 85.7)" fill="url(#gm3)"/><ellipse cx="65.5" cy="85.4" rx="4.2" ry="3.3" transform="rotate(82 65.5 85.4)" fill="url(#gm1)"/><ellipse cx="72.9" cy="84.4" rx="4.4" ry="3.3" transform="rotate(138 72.9 84.4)" fill="url(#gm0)"/><ellipse cx="80.0" cy="84.6" rx="4.1" ry="3.0" transform="rotate(178 80.0 84.6)" fill="url(#gm1)"/><ellipse cx="87.8" cy="86.4" rx="4.4" ry="3.0" transform="rotate(109 87.8 86.4)" fill="url(#gm3)"/><ellipse cx="95.0" cy="86.8" rx="4.4" ry="3.1" transform="rotate(111 95.0 86.8)" fill="url(#gm4)"/><ellipse cx="102.7" cy="85.7" rx="4.4" ry="3.1" transform="rotate(57 102.7 85.7)" fill="url(#gm1)"/><ellipse cx="108.3" cy="85.6" rx="4.3" ry="3.1" transform="rotate(12 108.3 85.6)" fill="url(#gm4)"/><ellipse cx="115.0" cy="85.6" rx="3.6" ry="2.5" transform="rotate(64 115.0 85.6)" fill="url(#gm2)"/><ellipse cx="61.9" cy="90.7" rx="4.3" ry="3.1" transform="rotate(17 61.9 90.7)" fill="url(#gm4)"/><ellipse cx="67.6" cy="92.7" rx="3.8" ry="2.8" transform="rotate(55 67.6 92.7)" fill="url(#gm2)"/><ellipse cx="74.8" cy="91.0" rx="4.4" ry="3.0" transform="rotate(73 74.8 91.0)" fill="url(#gm1)"/><ellipse cx="84.0" cy="91.1" rx="3.8" ry="2.7" transform="rotate(161 84.0 91.1)" fill="url(#gm4)"/><ellipse cx="89.7" cy="90.4" rx="4.1" ry="2.9" transform="rotate(36 89.7 90.4)" fill="url(#gm0)"/><ellipse cx="95.8" cy="90.9" rx="3.7" ry="3.0" transform="rotate(56 95.8 90.9)" fill="url(#gm2)"/><ellipse cx="104.0" cy="90.6" rx="4.0" ry="3.0" transform="rotate(98 104.0 90.6)" fill="url(#gm0)"/><ellipse cx="110.6" cy="92.4" rx="4.1" ry="2.9" transform="rotate(22 110.6 92.4)" fill="url(#gm0)"/><ellipse cx="117.6" cy="91.0" rx="4.1" ry="3.2" transform="rotate(160 117.6 91.0)" fill="url(#gm1)"/><ellipse cx="56.0" cy="98.7" rx="4.5" ry="3.1" transform="rotate(111 56.0 98.7)" fill="url(#gm3)"/><ellipse cx="65.6" cy="96.0" rx="4.1" ry="3.1" transform="rotate(121 65.6 96.0)" fill="url(#gm0)"/><ellipse cx="70.6" cy="98.2" rx="3.8" ry="2.8" transform="rotate(26 70.6 98.2)" fill="url(#gm4)"/><ellipse cx="77.8" cy="98.8" rx="4.2" ry="3.1" transform="rotate(172 77.8 98.8)" fill="url(#gm3)"/><ellipse cx="86.2" cy="97.0" rx="3.7" ry="2.5" transform="rotate(30 86.2 97.0)" fill="url(#gm4)"/><ellipse cx="93.2" cy="96.0" rx="4.3" ry="3.0" transform="rotate(59 93.2 96.0)" fill="url(#gm2)"/><ellipse cx="102.4" cy="96.7" rx="3.8" ry="2.8" transform="rotate(64 102.4 96.7)" fill="url(#gm0)"/><ellipse cx="107.5" cy="97.7" rx="4.6" ry="3.4" transform="rotate(110 107.5 97.7)" fill="url(#gm0)"/><ellipse cx="116.3" cy="97.3" rx="3.7" ry="2.5" transform="rotate(59 116.3 97.3)" fill="url(#gm3)"/><ellipse cx="60.3" cy="104.3" rx="3.8" ry="2.7" transform="rotate(175 60.3 104.3)" fill="url(#gm0)"/><ellipse cx="68.6" cy="103.1" rx="3.8" ry="3.0" transform="rotate(165 68.6 103.1)" fill="url(#gm3)"/><ellipse cx="75.3" cy="104.3" rx="4.0" ry="2.8" transform="rotate(92 75.3 104.3)" fill="url(#gm3)"/><ellipse cx="81.0" cy="103.2" rx="3.7" ry="2.7" transform="rotate(171 81.0 103.2)" fill="url(#gm2)"/><ellipse cx="91.0" cy="104.5" rx="4.3" ry="2.9" transform="rotate(71 91.0 104.5)" fill="url(#gm2)"/><ellipse cx="98.7" cy="103.8" rx="3.6" ry="2.6" transform="rotate(88 98.7 103.8)" fill="url(#gm1)"/><ellipse cx="105.9" cy="103.0" rx="4.0" ry="3.0" transform="rotate(107 105.9 103.0)" fill="url(#gm3)"/><ellipse cx="113.2" cy="102.5" rx="3.8" ry="2.9" transform="rotate(7 113.2 102.5)" fill="url(#gm2)"/><ellipse cx="120.8" cy="102.2" rx="3.8" ry="2.9" transform="rotate(134 120.8 102.2)" fill="url(#gm4)"/><ellipse cx="57.9" cy="109.7" rx="3.7" ry="3.0" transform="rotate(94 57.9 109.7)" fill="url(#gm1)"/><ellipse cx="63.5" cy="109.4" rx="4.0" ry="2.8" transform="rotate(58 63.5 109.4)" fill="url(#gm2)"/><ellipse cx="70.1" cy="108.7" rx="4.4" ry="3.1" transform="rotate(83 70.1 108.7)" fill="url(#gm1)"/><ellipse cx="77.7" cy="110.3" rx="4.5" ry="3.4" transform="rotate(83 77.7 110.3)" fill="url(#gm1)"/><ellipse cx="84.6" cy="109.2" rx="4.6" ry="3.1" transform="rotate(37 84.6 109.2)" fill="url(#gm4)"/><ellipse cx="92.9" cy="109.8" rx="4.4" ry="3.0" transform="rotate(50 92.9 109.8)" fill="url(#gm3)"/><ellipse cx="100.7" cy="110.0" rx="4.5" ry="3.4" transform="rotate(150 100.7 110.0)" fill="url(#gm0)"/><ellipse cx="109.3" cy="109.8" rx="3.8" ry="2.7" transform="rotate(40 109.3 109.8)" fill="url(#gm4)"/><ellipse cx="114.0" cy="109.7" rx="3.9" ry="2.7" transform="rotate(6 114.0 109.7)" fill="url(#gm0)"/></g><clipPath id="c2"><rect x="114.8" y="3.5" width="54.8" height="102"/></clipPath><g clip-path="url(#c2)"><rect x="114.8" y="3.5" width="54.8" height="102" fill="#150d09"/><ellipse cx="114.6" cy="3.2" rx="4.5" ry="3.4" transform="rotate(29 114.6 3.2)" fill="url(#gmd4)"/><ellipse cx="119.7" cy="4.4" rx="3.8" ry="2.8" transform="rotate(164 119.7 4.4)" fill="url(#gmd2)"/><ellipse cx="127.3" cy="4.1" rx="4.2" ry="3.2" transform="rotate(35 127.3 4.1)" fill="url(#gmd4)"/><ellipse cx="136.7" cy="2.4" rx="4.2" ry="3.2" transform="rotate(82 136.7 2.4)" fill="url(#gmd2)"/><ellipse cx="142.2" cy="1.7" rx="3.9" ry="2.8" transform="rotate(155 142.2 1.7)" fill="url(#gmd4)"/><ellipse cx="151.3" cy="2.3" rx="4.4" ry="3.4" transform="rotate(21 151.3 2.3)" fill="url(#gmd4)"/><ellipse cx="156.3" cy="2.7" rx="4.2" ry="2.9" transform="rotate(92 156.3 2.7)" fill="url(#gmd1)"/><ellipse cx="165.1" cy="2.8" rx="4.1" ry="2.9" transform="rotate(168 165.1 2.8)" fill="url(#gmd4)"/><ellipse cx="171.6" cy="4.0" rx="4.6" ry="3.5" transform="rotate(161 171.6 4.0)" fill="url(#gmd4)"/><ellipse cx="115.9" cy="10.2" rx="4.3" ry="3.1" transform="rotate(17 115.9 10.2)" fill="url(#gmd2)"/><ellipse cx="123.6" cy="9.3" rx="4.2" ry="2.9" transform="rotate(13 123.6 9.3)" fill="url(#gmd3)"/><ellipse cx="130.4" cy="8.8" rx="3.7" ry="2.9" transform="rotate(112 130.4 8.8)" fill="url(#gmd0)"/><ellipse cx="138.4" cy="7.5" rx="4.2" ry="3.2" transform="rotate(150 138.4 7.5)" fill="url(#gmd4)"/><ellipse cx="148.3" cy="8.1" rx="4.3" ry="3.1" transform="rotate(148 148.3 8.1)" fill="url(#gmd3)"/><ellipse cx="153.3" cy="8.1" rx="4.1" ry="3.1" transform="rotate(166 153.3 8.1)" fill="url(#gmd4)"/><ellipse cx="162.6" cy="7.6" rx="3.7" ry="2.9" transform="rotate(161 162.6 7.6)" fill="url(#gmd2)"/><ellipse cx="167.5" cy="7.6" rx="4.4" ry="3.1" transform="rotate(91 167.5 7.6)" fill="url(#gmd4)"/><ellipse cx="176.9" cy="9.3" rx="4.1" ry="3.2" transform="rotate(83 176.9 9.3)" fill="url(#gmd2)"/><ellipse cx="113.2" cy="16.0" rx="4.6" ry="3.1" transform="rotate(6 113.2 16.0)" fill="url(#gmd4)"/><ellipse cx="121.6" cy="15.3" rx="3.6" ry="2.7" transform="rotate(136 121.6 15.3)" fill="url(#gmd3)"/><ellipse cx="129.7" cy="14.3" rx="4.3" ry="3.2" transform="rotate(20 129.7 14.3)" fill="url(#gmd2)"/><ellipse cx="134.7" cy="13.6" rx="3.7" ry="2.5" transform="rotate(172 134.7 13.6)" fill="url(#gmd4)"/><ellipse cx="141.6" cy="13.9" rx="4.5" ry="3.3" transform="rotate(88 141.6 13.9)" fill="url(#gmd3)"/><ellipse cx="149.4" cy="14.4" rx="4.6" ry="3.1" transform="rotate(169 149.4 14.4)" fill="url(#gmd2)"/><ellipse cx="156.9" cy="15.4" rx="4.5" ry="3.3" transform="rotate(56 156.9 15.4)" fill="url(#gmd4)"/><ellipse cx="164.5" cy="13.8" rx="4.2" ry="2.8" transform="rotate(112 164.5 13.8)" fill="url(#gmd1)"/><ellipse cx="170.9" cy="13.4" rx="4.0" ry="2.8" transform="rotate(126 170.9 13.4)" fill="url(#gmd3)"/><ellipse cx="115.5" cy="20.9" rx="4.3" ry="3.0" transform="rotate(148 115.5 20.9)" fill="url(#gmd4)"/><ellipse cx="122.8" cy="21.8" rx="3.7" ry="2.4" transform="rotate(83 122.8 21.8)" fill="url(#gmd0)"/><ellipse cx="133.0" cy="20.6" rx="4.5" ry="3.5" transform="rotate(137 133.0 20.6)" fill="url(#gmd1)"/><ellipse cx="139.6" cy="21.7" rx="4.3" ry="3.1" transform="rotate(29 139.6 21.7)" fill="url(#gmd0)"/><ellipse cx="147.6" cy="21.3" rx="4.1" ry="2.8" transform="rotate(93 147.6 21.3)" fill="url(#gmd4)"/><ellipse cx="153.9" cy="19.9" rx="4.6" ry="3.7" transform="rotate(45 153.9 19.9)" fill="url(#gmd1)"/><ellipse cx="160.0" cy="21.0" rx="4.2" ry="2.8" transform="rotate(69 160.0 21.0)" fill="url(#gmd4)"/><ellipse cx="168.7" cy="19.3" rx="3.6" ry="2.8" transform="rotate(39 168.7 19.3)" fill="url(#gmd1)"/><ellipse cx="175.8" cy="21.7" rx="3.8" ry="2.8" transform="rotate(176 175.8 21.7)" fill="url(#gmd2)"/><ellipse cx="112.4" cy="25.8" rx="4.3" ry="3.1" transform="rotate(169 112.4 25.8)" fill="url(#gmd2)"/><ellipse cx="119.6" cy="26.4" rx="3.8" ry="2.6" transform="rotate(85 119.6 26.4)" fill="url(#gmd0)"/><ellipse cx="126.9" cy="27.1" rx="4.1" ry="2.9" transform="rotate(65 126.9 27.1)" fill="url(#gmd1)"/><ellipse cx="137.2" cy="27.7" rx="4.6" ry="3.1" transform="rotate(32 137.2 27.7)" fill="url(#gmd2)"/><ellipse cx="143.8" cy="26.2" rx="3.7" ry="2.6" transform="rotate(58 143.8 26.2)" fill="url(#gmd3)"/><ellipse cx="151.3" cy="25.9" rx="3.8" ry="2.6" transform="rotate(169 151.3 25.9)" fill="url(#gmd2)"/><ellipse cx="158.2" cy="25.8" rx="4.3" ry="3.4" transform="rotate(11 158.2 25.8)" fill="url(#gmd2)"/><ellipse cx="164.5" cy="25.8" rx="3.7" ry="2.9" transform="rotate(119 164.5 25.8)" fill="url(#gmd4)"/><ellipse cx="174.1" cy="27.1" rx="4.3" ry="3.2" transform="rotate(87 174.1 27.1)" fill="url(#gmd3)"/><ellipse cx="117.7" cy="32.2" rx="4.4" ry="2.9" transform="rotate(78 117.7 32.2)" fill="url(#gmd4)"/><ellipse cx="124.4" cy="33.7" rx="4.6" ry="3.7" transform="rotate(11 124.4 33.7)" fill="url(#gmd0)"/><ellipse cx="131.3" cy="32.3" rx="4.0" ry="3.2" transform="rotate(50 131.3 32.3)" fill="url(#gmd0)"/><ellipse cx="140.9" cy="33.3" rx="3.9" ry="3.1" transform="rotate(20 140.9 33.3)" fill="url(#gmd1)"/><ellipse cx="145.1" cy="32.1" rx="3.7" ry="2.9" transform="rotate(142 145.1 32.1)" fill="url(#gmd4)"/><ellipse cx="155.4" cy="33.1" rx="4.3" ry="3.0" transform="rotate(108 155.4 33.1)" fill="url(#gmd0)"/><ellipse cx="161.0" cy="32.2" rx="4.5" ry="3.3" transform="rotate(161 161.0 32.2)" fill="url(#gmd0)"/><ellipse cx="167.5" cy="33.8" rx="4.0" ry="3.1" transform="rotate(128 167.5 33.8)" fill="url(#gmd1)"/><ellipse cx="175.4" cy="31.6" rx="4.0" ry="3.1" transform="rotate(98 175.4 31.6)" fill="url(#gmd4)"/><ellipse cx="112.0" cy="38.9" rx="3.7" ry="2.6" transform="rotate(170 112.0 38.9)" fill="url(#gmd3)"/><ellipse cx="121.8" cy="38.9" rx="4.2" ry="3.2" transform="rotate(152 121.8 38.9)" fill="url(#gmd4)"/><ellipse cx="127.7" cy="38.6" rx="4.2" ry="2.8" transform="rotate(138 127.7 38.6)" fill="url(#gmd3)"/><ellipse cx="135.5" cy="37.0" rx="4.1" ry="2.7" transform="rotate(84 135.5 37.0)" fill="url(#gmd2)"/><ellipse cx="141.7" cy="39.6" rx="4.0" ry="2.7" transform="rotate(40 141.7 39.6)" fill="url(#gmd3)"/><ellipse cx="148.9" cy="39.2" rx="3.9" ry="2.9" transform="rotate(137 148.9 39.2)" fill="url(#gmd1)"/><ellipse cx="157.9" cy="38.9" rx="3.8" ry="2.7" transform="rotate(37 157.9 38.9)" fill="url(#gmd1)"/><ellipse cx="164.2" cy="38.4" rx="4.1" ry="2.8" transform="rotate(45 164.2 38.4)" fill="url(#gmd3)"/><ellipse cx="174.1" cy="37.1" rx="3.7" ry="2.9" transform="rotate(95 174.1 37.1)" fill="url(#gmd4)"/><ellipse cx="115.9" cy="45.1" rx="4.6" ry="3.2" transform="rotate(101 115.9 45.1)" fill="url(#gmd4)"/><ellipse cx="126.2" cy="44.6" rx="4.5" ry="3.4" transform="rotate(33 126.2 44.6)" fill="url(#gmd3)"/><ellipse cx="130.9" cy="45.3" rx="4.5" ry="3.4" transform="rotate(116 130.9 45.3)" fill="url(#gmd2)"/><ellipse cx="139.7" cy="43.1" rx="4.3" ry="3.4" transform="rotate(112 139.7 43.1)" fill="url(#gmd1)"/><ellipse cx="147.1" cy="45.5" rx="4.1" ry="2.7" transform="rotate(37 147.1 45.5)" fill="url(#gmd2)"/><ellipse cx="154.8" cy="45.5" rx="3.7" ry="2.5" transform="rotate(174 154.8 45.5)" fill="url(#gmd2)"/><ellipse cx="161.1" cy="44.2" rx="3.8" ry="2.9" transform="rotate(174 161.1 44.2)" fill="url(#gmd3)"/><ellipse cx="168.5" cy="44.3" rx="4.0" ry="2.9" transform="rotate(83 168.5 44.3)" fill="url(#gmd1)"/><ellipse cx="176.1" cy="45.6" rx="4.4" ry="3.0" transform="rotate(171 176.1 45.6)" fill="url(#gmd2)"/><ellipse cx="112.7" cy="51.3" rx="4.5" ry="3.0" transform="rotate(160 112.7 51.3)" fill="url(#gmd4)"/><ellipse cx="120.3" cy="50.1" rx="4.1" ry="3.2" transform="rotate(161 120.3 50.1)" fill="url(#gmd3)"/><ellipse cx="127.2" cy="51.0" rx="4.0" ry="2.7" transform="rotate(82 127.2 51.0)" fill="url(#gmd4)"/><ellipse cx="136.8" cy="51.4" rx="3.8" ry="2.8" transform="rotate(19 136.8 51.4)" fill="url(#gmd2)"/><ellipse cx="143.4" cy="50.0" rx="4.4" ry="3.0" transform="rotate(67 143.4 50.0)" fill="url(#gmd2)"/><ellipse cx="149.5" cy="50.7" rx="4.2" ry="3.0" transform="rotate(171 149.5 50.7)" fill="url(#gmd0)"/><ellipse cx="157.3" cy="51.0" rx="4.0" ry="3.1" transform="rotate(76 157.3 51.0)" fill="url(#gmd1)"/><ellipse cx="163.3" cy="49.7" rx="3.7" ry="3.0" transform="rotate(86 163.3 49.7)" fill="url(#gmd3)"/><ellipse cx="173.5" cy="49.7" rx="4.0" ry="2.8" transform="rotate(145 173.5 49.7)" fill="url(#gmd2)"/><ellipse cx="118.6" cy="57.5" rx="4.1" ry="3.1" transform="rotate(172 118.6 57.5)" fill="url(#gmd0)"/><ellipse cx="125.5" cy="56.7" rx="4.1" ry="3.0" transform="rotate(169 125.5 56.7)" fill="url(#gmd0)"/><ellipse cx="132.4" cy="55.5" rx="4.4" ry="3.1" transform="rotate(108 132.4 55.5)" fill="url(#gmd1)"/><ellipse cx="139.9" cy="56.8" rx="4.3" ry="3.3" transform="rotate(87 139.9 56.8)" fill="url(#gmd1)"/><ellipse cx="146.7" cy="55.8" rx="4.5" ry="3.1" transform="rotate(79 146.7 55.8)" fill="url(#gmd3)"/><ellipse cx="152.5" cy="54.8" rx="4.2" ry="2.8" transform="rotate(10 152.5 54.8)" fill="url(#gmd2)"/><ellipse cx="161.7" cy="55.9" rx="4.1" ry="2.9" transform="rotate(151 161.7 55.9)" fill="url(#gmd2)"/><ellipse cx="168.4" cy="57.2" rx="4.4" ry="3.1" transform="rotate(24 168.4 57.2)" fill="url(#gmd1)"/><ellipse cx="175.1" cy="56.9" rx="4.1" ry="3.1" transform="rotate(53 175.1 56.9)" fill="url(#gmd1)"/><ellipse cx="113.5" cy="60.8" rx="3.9" ry="3.0" transform="rotate(142 113.5 60.8)" fill="url(#gmd2)"/><ellipse cx="122.0" cy="63.2" rx="4.5" ry="3.0" transform="rotate(46 122.0 63.2)" fill="url(#gmd1)"/><ellipse cx="127.3" cy="61.0" rx="4.5" ry="3.2" transform="rotate(146 127.3 61.0)" fill="url(#gmd1)"/><ellipse cx="136.3" cy="62.6" rx="3.8" ry="2.9" transform="rotate(152 136.3 62.6)" fill="url(#gmd4)"/><ellipse cx="142.9" cy="62.0" rx="4.6" ry="3.1" transform="rotate(57 142.9 62.0)" fill="url(#gmd4)"/><ellipse cx="151.4" cy="61.0" rx="4.3" ry="3.4" transform="rotate(78 151.4 61.0)" fill="url(#gmd4)"/><ellipse cx="157.7" cy="63.1" rx="4.1" ry="3.0" transform="rotate(47 157.7 63.1)" fill="url(#gmd0)"/><ellipse cx="166.5" cy="61.1" rx="4.2" ry="2.9" transform="rotate(116 166.5 61.1)" fill="url(#gmd0)"/><ellipse cx="173.0" cy="62.3" rx="4.1" ry="3.2" transform="rotate(12 173.0 62.3)" fill="url(#gmd0)"/><ellipse cx="117.8" cy="68.5" rx="3.8" ry="2.8" transform="rotate(68 117.8 68.5)" fill="url(#gmd1)"/><ellipse cx="123.2" cy="68.6" rx="3.8" ry="2.7" transform="rotate(47 123.2 68.6)" fill="url(#gmd3)"/><ellipse cx="131.7" cy="67.5" rx="3.7" ry="2.5" transform="rotate(161 131.7 67.5)" fill="url(#gmd2)"/><ellipse cx="139.9" cy="67.6" rx="4.0" ry="2.8" transform="rotate(160 139.9 67.6)" fill="url(#gmd4)"/><ellipse cx="146.7" cy="69.2" rx="4.1" ry="2.8" transform="rotate(18 146.7 69.2)" fill="url(#gmd0)"/><ellipse cx="152.7" cy="68.2" rx="4.3" ry="3.0" transform="rotate(34 152.7 68.2)" fill="url(#gmd3)"/><ellipse cx="160.4" cy="67.7" rx="4.4" ry="3.2" transform="rotate(46 160.4 67.7)" fill="url(#gmd3)"/><ellipse cx="169.3" cy="67.5" rx="4.3" ry="3.0" transform="rotate(78 169.3 67.5)" fill="url(#gmd4)"/><ellipse cx="176.0" cy="66.8" rx="4.1" ry="3.2" transform="rotate(140 176.0 66.8)" fill="url(#gmd2)"/><ellipse cx="112.6" cy="74.4" rx="3.7" ry="2.7" transform="rotate(88 112.6 74.4)" fill="url(#gmd3)"/><ellipse cx="122.2" cy="73.0" rx="3.6" ry="2.5" transform="rotate(128 122.2 73.0)" fill="url(#gmd1)"/><ellipse cx="129.5" cy="74.5" rx="3.6" ry="2.4" transform="rotate(176 129.5 74.5)" fill="url(#gmd0)"/><ellipse cx="135.0" cy="73.1" rx="3.9" ry="2.6" transform="rotate(159 135.0 73.1)" fill="url(#gmd4)"/><ellipse cx="142.3" cy="74.1" rx="4.2" ry="2.8" transform="rotate(95 142.3 74.1)" fill="url(#gmd1)"/><ellipse cx="151.8" cy="73.4" rx="4.2" ry="3.0" transform="rotate(140 151.8 73.4)" fill="url(#gmd1)"/><ellipse cx="158.8" cy="74.8" rx="3.8" ry="2.7" transform="rotate(50 158.8 74.8)" fill="url(#gmd4)"/><ellipse cx="166.4" cy="73.8" rx="3.9" ry="2.8" transform="rotate(158 166.4 73.8)" fill="url(#gmd4)"/><ellipse cx="172.2" cy="73.1" rx="3.9" ry="2.7" transform="rotate(77 172.2 73.1)" fill="url(#gmd4)"/><ellipse cx="117.4" cy="80.4" rx="4.4" ry="3.5" transform="rotate(99 117.4 80.4)" fill="url(#gmd1)"/><ellipse cx="124.3" cy="78.4" rx="4.0" ry="3.1" transform="rotate(130 124.3 78.4)" fill="url(#gmd3)"/><ellipse cx="131.3" cy="79.6" rx="4.3" ry="3.1" transform="rotate(103 131.3 79.6)" fill="url(#gmd4)"/><ellipse cx="139.9" cy="79.8" rx="4.1" ry="3.0" transform="rotate(75 139.9 79.8)" fill="url(#gmd2)"/><ellipse cx="148.0" cy="80.7" rx="4.3" ry="3.2" transform="rotate(94 148.0 80.7)" fill="url(#gmd0)"/><ellipse cx="152.4" cy="79.1" rx="4.2" ry="3.4" transform="rotate(102 152.4 79.1)" fill="url(#gmd0)"/><ellipse cx="162.5" cy="81.0" rx="3.8" ry="2.6" transform="rotate(35 162.5 81.0)" fill="url(#gmd3)"/><ellipse cx="169.9" cy="78.8" rx="3.9" ry="2.7" transform="rotate(102 169.9 78.8)" fill="url(#gmd1)"/><ellipse cx="176.9" cy="79.3" rx="4.2" ry="3.3" transform="rotate(141 176.9 79.3)" fill="url(#gmd4)"/><ellipse cx="111.6" cy="86.1" rx="4.1" ry="3.1" transform="rotate(100 111.6 86.1)" fill="url(#gmd3)"/><ellipse cx="120.1" cy="84.3" rx="4.1" ry="2.7" transform="rotate(162 120.1 84.3)" fill="url(#gmd3)"/><ellipse cx="126.6" cy="86.0" rx="4.3" ry="3.1" transform="rotate(85 126.6 86.0)" fill="url(#gmd1)"/><ellipse cx="134.1" cy="85.7" rx="3.8" ry="3.0" transform="rotate(134 134.1 85.7)" fill="url(#gmd3)"/><ellipse cx="143.4" cy="84.3" rx="4.5" ry="3.5" transform="rotate(118 143.4 84.3)" fill="url(#gmd4)"/><ellipse cx="149.4" cy="86.4" rx="4.5" ry="3.0" transform="rotate(8 149.4 86.4)" fill="url(#gmd1)"/><ellipse cx="157.6" cy="84.4" rx="4.0" ry="2.9" transform="rotate(61 157.6 84.4)" fill="url(#gmd1)"/><ellipse cx="165.4" cy="86.8" rx="3.8" ry="2.7" transform="rotate(157 165.4 86.8)" fill="url(#gmd4)"/><ellipse cx="173.5" cy="85.4" rx="3.8" ry="2.7" transform="rotate(145 173.5 85.4)" fill="url(#gmd1)"/><ellipse cx="118.7" cy="91.9" rx="4.4" ry="3.5" transform="rotate(109 118.7 91.9)" fill="url(#gmd4)"/><ellipse cx="124.8" cy="90.3" rx="4.0" ry="2.7" transform="rotate(127 124.8 90.3)" fill="url(#gmd4)"/><ellipse cx="131.1" cy="90.8" rx="3.9" ry="2.9" transform="rotate(165 131.1 90.8)" fill="url(#gmd4)"/><ellipse cx="139.5" cy="91.5" rx="4.5" ry="3.0" transform="rotate(150 139.5 91.5)" fill="url(#gmd4)"/><ellipse cx="148.4" cy="91.0" rx="3.8" ry="2.5" transform="rotate(7 148.4 91.0)" fill="url(#gmd4)"/><ellipse cx="154.8" cy="91.3" rx="4.4" ry="3.4" transform="rotate(6 154.8 91.3)" fill="url(#gmd2)"/><ellipse cx="160.0" cy="91.7" rx="4.6" ry="3.6" transform="rotate(86 160.0 91.7)" fill="url(#gmd3)"/><ellipse cx="167.9" cy="92.1" rx="4.1" ry="3.3" transform="rotate(141 167.9 92.1)" fill="url(#gmd2)"/><ellipse cx="175.4" cy="91.6" rx="3.9" ry="3.1" transform="rotate(35 175.4 91.6)" fill="url(#gmd4)"/><ellipse cx="113.2" cy="98.6" rx="3.8" ry="2.6" transform="rotate(65 113.2 98.6)" fill="url(#gmd2)"/><ellipse cx="121.7" cy="98.1" rx="4.1" ry="3.3" transform="rotate(46 121.7 98.1)" fill="url(#gmd3)"/><ellipse cx="126.5" cy="98.0" rx="4.6" ry="3.0" transform="rotate(98 126.5 98.0)" fill="url(#gmd0)"/><ellipse cx="134.8" cy="96.2" rx="4.2" ry="3.2" transform="rotate(13 134.8 96.2)" fill="url(#gmd2)"/><ellipse cx="142.3" cy="98.5" rx="4.1" ry="2.9" transform="rotate(33 142.3 98.5)" fill="url(#gmd1)"/><ellipse cx="149.5" cy="97.6" rx="4.5" ry="3.4" transform="rotate(104 149.5 97.6)" fill="url(#gmd1)"/><ellipse cx="156.1" cy="97.0" rx="4.0" ry="2.6" transform="rotate(20 156.1 97.0)" fill="url(#gmd0)"/><ellipse cx="166.6" cy="98.5" rx="3.7" ry="2.5" transform="rotate(42 166.6 98.5)" fill="url(#gmd2)"/><ellipse cx="172.3" cy="98.3" rx="3.7" ry="2.8" transform="rotate(64 172.3 98.3)" fill="url(#gmd0)"/><ellipse cx="117.8" cy="103.5" rx="4.2" ry="3.1" transform="rotate(10 117.8 103.5)" fill="url(#gmd4)"/><ellipse cx="123.2" cy="104.6" rx="4.5" ry="3.3" transform="rotate(43 123.2 104.6)" fill="url(#gmd2)"/><ellipse cx="133.3" cy="104.0" rx="4.5" ry="3.1" transform="rotate(177 133.3 104.0)" fill="url(#gmd1)"/><ellipse cx="138.1" cy="104.6" rx="3.9" ry="3.0" transform="rotate(98 138.1 104.6)" fill="url(#gmd4)"/><ellipse cx="146.5" cy="103.4" rx="4.5" ry="3.4" transform="rotate(42 146.5 103.4)" fill="url(#gmd4)"/><ellipse cx="152.3" cy="104.4" rx="4.3" ry="3.2" transform="rotate(133 152.3 104.4)" fill="url(#gmd0)"/><ellipse cx="159.8" cy="102.4" rx="4.2" ry="3.1" transform="rotate(100 159.8 102.4)" fill="url(#gmd0)"/><ellipse cx="168.1" cy="102.5" rx="4.0" ry="3.1" transform="rotate(18 168.1 102.5)" fill="url(#gmd3)"/><ellipse cx="176.4" cy="102.8" rx="4.1" ry="2.7" transform="rotate(174 176.4 102.8)" fill="url(#gmd3)"/><ellipse cx="114.5" cy="110.4" rx="4.4" ry="3.3" transform="rotate(134 114.5 110.4)" fill="url(#gmd2)"/><ellipse cx="120.7" cy="109.8" rx="4.3" ry="3.3" transform="rotate(176 120.7 109.8)" fill="url(#gmd1)"/><ellipse cx="127.1" cy="110.2" rx="3.9" ry="3.1" transform="rotate(118 127.1 110.2)" fill="url(#gmd4)"/><ellipse cx="135.0" cy="109.1" rx="4.3" ry="3.4" transform="rotate(137 135.0 109.1)" fill="url(#gmd1)"/><ellipse cx="142.6" cy="108.5" rx="3.8" ry="2.7" transform="rotate(41 142.6 108.5)" fill="url(#gmd4)"/><ellipse cx="149.4" cy="107.9" rx="3.6" ry="2.7" transform="rotate(92 149.4 107.9)" fill="url(#gmd3)"/><ellipse cx="157.1" cy="108.8" rx="4.5" ry="3.1" transform="rotate(159 157.1 108.8)" fill="url(#gmd1)"/><ellipse cx="165.3" cy="107.9" rx="4.2" ry="3.2" transform="rotate(29 165.3 107.9)" fill="url(#gmd3)"/><ellipse cx="171.3" cy="110.6" rx="3.9" ry="2.8" transform="rotate(119 171.3 110.6)" fill="url(#gmd3)"/></g><clipPath id="c3"><rect x="171.5" y="3.5" width="54.7" height="102"/></clipPath><g clip-path="url(#c3)"><rect x="171.5" y="3.5" width="54.7" height="102" fill="#0f0a08"/><ellipse cx="169.8" cy="2.0" rx="4.1" ry="2.8" transform="rotate(61 169.8 2.0)" fill="url(#gd1)"/><ellipse cx="178.8" cy="3.8" rx="4.1" ry="3.2" transform="rotate(12 178.8 3.8)" fill="url(#gd2)"/><ellipse cx="183.4" cy="4.0" rx="4.3" ry="2.8" transform="rotate(176 183.4 4.0)" fill="url(#gd1)"/><ellipse cx="191.2" cy="2.5" rx="3.7" ry="2.8" transform="rotate(144 191.2 2.5)" fill="url(#gd1)"/><ellipse cx="200.4" cy="2.4" rx="3.6" ry="2.4" transform="rotate(130 200.4 2.4)" fill="url(#gd0)"/><ellipse cx="206.1" cy="4.4" rx="3.8" ry="2.8" transform="rotate(91 206.1 4.4)" fill="url(#gd1)"/><ellipse cx="213.8" cy="4.2" rx="3.9" ry="2.9" transform="rotate(111 213.8 4.2)" fill="url(#gd2)"/><ellipse cx="220.3" cy="3.0" rx="3.8" ry="2.9" transform="rotate(167 220.3 3.0)" fill="url(#gd4)"/><ellipse cx="228.0" cy="2.4" rx="4.2" ry="3.3" transform="rotate(142 228.0 2.4)" fill="url(#gd3)"/><ellipse cx="173.3" cy="8.4" rx="4.4" ry="3.3" transform="rotate(58 173.3 8.4)" fill="url(#gd1)"/><ellipse cx="181.0" cy="9.7" rx="4.1" ry="2.7" transform="rotate(156 181.0 9.7)" fill="url(#gd0)"/><ellipse cx="188.8" cy="7.6" rx="4.3" ry="3.2" transform="rotate(154 188.8 7.6)" fill="url(#gd2)"/><ellipse cx="197.6" cy="8.8" rx="4.2" ry="3.3" transform="rotate(19 197.6 8.8)" fill="url(#gd0)"/><ellipse cx="201.8" cy="8.3" rx="4.3" ry="2.9" transform="rotate(114 201.8 8.3)" fill="url(#gd0)"/><ellipse cx="210.5" cy="9.5" rx="4.4" ry="3.4" transform="rotate(48 210.5 9.5)" fill="url(#gd1)"/><ellipse cx="218.9" cy="10.1" rx="4.4" ry="3.2" transform="rotate(100 218.9 10.1)" fill="url(#gd4)"/><ellipse cx="227.3" cy="9.8" rx="4.1" ry="3.2" transform="rotate(77 227.3 9.8)" fill="url(#gd4)"/><ellipse cx="232.1" cy="9.4" rx="4.3" ry="3.2" transform="rotate(2 232.1 9.4)" fill="url(#gd4)"/><ellipse cx="171.0" cy="15.5" rx="4.6" ry="3.6" transform="rotate(79 171.0 15.5)" fill="url(#gd4)"/><ellipse cx="176.8" cy="14.4" rx="4.4" ry="3.5" transform="rotate(129 176.8 14.4)" fill="url(#gd1)"/><ellipse cx="186.0" cy="14.3" rx="4.2" ry="3.3" transform="rotate(5 186.0 14.3)" fill="url(#gd3)"/><ellipse cx="190.8" cy="15.8" rx="4.2" ry="3.0" transform="rotate(2 190.8 15.8)" fill="url(#gd3)"/><ellipse cx="197.9" cy="13.7" rx="4.0" ry="3.2" transform="rotate(45 197.9 13.7)" fill="url(#gd3)"/><ellipse cx="208.4" cy="15.5" rx="3.7" ry="2.7" transform="rotate(177 208.4 15.5)" fill="url(#gd0)"/><ellipse cx="216.0" cy="15.3" rx="4.0" ry="3.0" transform="rotate(171 216.0 15.3)" fill="url(#gd4)"/><ellipse cx="221.4" cy="13.7" rx="4.3" ry="3.3" transform="rotate(136 221.4 13.7)" fill="url(#gd0)"/><ellipse cx="230.4" cy="15.9" rx="4.1" ry="2.9" transform="rotate(49 230.4 15.9)" fill="url(#gd0)"/><ellipse cx="173.6" cy="20.0" rx="4.1" ry="3.0" transform="rotate(50 173.6 20.0)" fill="url(#gd0)"/><ellipse cx="181.3" cy="22.0" rx="3.7" ry="2.6" transform="rotate(49 181.3 22.0)" fill="url(#gd0)"/><ellipse cx="188.4" cy="20.1" rx="4.4" ry="2.9" transform="rotate(148 188.4 20.1)" fill="url(#gd1)"/><ellipse cx="194.5" cy="21.9" rx="4.1" ry="3.2" transform="rotate(111 194.5 21.9)" fill="url(#gd1)"/><ellipse cx="202.2" cy="22.0" rx="4.1" ry="3.1" transform="rotate(156 202.2 22.0)" fill="url(#gd3)"/><ellipse cx="209.0" cy="21.3" rx="4.6" ry="3.3" transform="rotate(147 209.0 21.3)" fill="url(#gd0)"/><ellipse cx="217.5" cy="21.8" rx="3.8" ry="2.6" transform="rotate(128 217.5 21.8)" fill="url(#gd3)"/><ellipse cx="224.1" cy="20.3" rx="3.6" ry="2.8" transform="rotate(171 224.1 20.3)" fill="url(#gd3)"/><ellipse cx="233.6" cy="21.1" rx="3.8" ry="2.7" transform="rotate(65 233.6 21.1)" fill="url(#gd0)"/><ellipse cx="169.8" cy="25.3" rx="4.4" ry="3.5" transform="rotate(152 169.8 25.3)" fill="url(#gd4)"/><ellipse cx="179.1" cy="26.5" rx="4.5" ry="3.5" transform="rotate(67 179.1 26.5)" fill="url(#gd3)"/><ellipse cx="186.3" cy="25.2" rx="4.2" ry="2.9" transform="rotate(95 186.3 25.2)" fill="url(#gd4)"/><ellipse cx="192.3" cy="26.1" rx="4.6" ry="3.6" transform="rotate(2 192.3 26.1)" fill="url(#gd3)"/><ellipse cx="199.6" cy="27.4" rx="4.5" ry="3.5" transform="rotate(65 199.6 27.4)" fill="url(#gd0)"/><ellipse cx="207.4" cy="27.1" rx="4.4" ry="3.0" transform="rotate(85 207.4 27.1)" fill="url(#gd4)"/><ellipse cx="213.8" cy="26.5" rx="4.3" ry="3.2" transform="rotate(17 213.8 26.5)" fill="url(#gd1)"/><ellipse cx="223.5" cy="26.2" rx="4.4" ry="3.5" transform="rotate(27 223.5 26.2)" fill="url(#gd1)"/><ellipse cx="227.7" cy="27.1" rx="4.6" ry="3.0" transform="rotate(17 227.7 27.1)" fill="url(#gd2)"/><ellipse cx="173.6" cy="31.5" rx="4.1" ry="3.0" transform="rotate(51 173.6 31.5)" fill="url(#gd2)"/><ellipse cx="182.0" cy="31.6" rx="4.2" ry="3.1" transform="rotate(60 182.0 31.6)" fill="url(#gd2)"/><ellipse cx="189.9" cy="31.3" rx="4.0" ry="2.7" transform="rotate(78 189.9 31.3)" fill="url(#gd0)"/><ellipse cx="197.1" cy="31.8" rx="3.9" ry="2.9" transform="rotate(79 197.1 31.8)" fill="url(#gd1)"/><ellipse cx="204.1" cy="32.9" rx="4.1" ry="3.0" transform="rotate(7 204.1 32.9)" fill="url(#gd1)"/><ellipse cx="209.3" cy="31.3" rx="3.8" ry="2.7" transform="rotate(62 209.3 31.3)" fill="url(#gd3)"/><ellipse cx="216.4" cy="33.4" rx="4.3" ry="3.2" transform="rotate(155 216.4 33.4)" fill="url(#gd4)"/><ellipse cx="225.4" cy="32.7" rx="3.7" ry="2.5" transform="rotate(62 225.4 32.7)" fill="url(#gd0)"/><ellipse cx="233.9" cy="33.3" rx="4.0" ry="3.0" transform="rotate(112 233.9 33.3)" fill="url(#gd0)"/><ellipse cx="170.1" cy="37.7" rx="3.9" ry="3.1" transform="rotate(31 170.1 37.7)" fill="url(#gd2)"/><ellipse cx="176.0" cy="39.4" rx="4.0" ry="3.0" transform="rotate(154 176.0 39.4)" fill="url(#gd0)"/><ellipse cx="185.2" cy="39.5" rx="3.8" ry="2.9" transform="rotate(66 185.2 39.5)" fill="url(#gd2)"/><ellipse cx="190.7" cy="37.8" rx="4.1" ry="3.2" transform="rotate(148 190.7 37.8)" fill="url(#gd4)"/><ellipse cx="201.3" cy="37.5" rx="4.0" ry="2.9" transform="rotate(151 201.3 37.5)" fill="url(#gd3)"/><ellipse cx="207.7" cy="38.4" rx="3.7" ry="2.8" transform="rotate(71 207.7 38.4)" fill="url(#gd0)"/><ellipse cx="215.4" cy="38.6" rx="4.3" ry="2.9" transform="rotate(28 215.4 38.6)" fill="url(#gd2)"/><ellipse cx="222.5" cy="38.0" rx="4.5" ry="3.3" transform="rotate(8 222.5 38.0)" fill="url(#gd3)"/><ellipse cx="228.0" cy="38.7" rx="3.9" ry="2.6" transform="rotate(47 228.0 38.7)" fill="url(#gd0)"/><ellipse cx="172.1" cy="44.2" rx="4.3" ry="3.4" transform="rotate(154 172.1 44.2)" fill="url(#gd3)"/><ellipse cx="179.5" cy="43.5" rx="4.6" ry="3.2" transform="rotate(98 179.5 43.5)" fill="url(#gd2)"/><ellipse cx="189.5" cy="45.3" rx="3.7" ry="3.0" transform="rotate(167 189.5 45.3)" fill="url(#gd4)"/><ellipse cx="196.1" cy="44.7" rx="4.4" ry="3.3" transform="rotate(6 196.1 44.7)" fill="url(#gd3)"/><ellipse cx="202.0" cy="44.4" rx="4.3" ry="2.9" transform="rotate(0 202.0 44.4)" fill="url(#gd0)"/><ellipse cx="210.5" cy="43.6" rx="4.3" ry="3.1" transform="rotate(70 210.5 43.6)" fill="url(#gd1)"/><ellipse cx="219.3" cy="44.5" rx="4.0" ry="2.7" transform="rotate(27 219.3 44.5)" fill="url(#gd3)"/><ellipse cx="223.8" cy="44.1" rx="3.7" ry="2.6" transform="rotate(82 223.8 44.1)" fill="url(#gd2)"/><ellipse cx="231.6" cy="43.5" rx="3.9" ry="3.1" transform="rotate(108 231.6 43.5)" fill="url(#gd0)"/><ellipse cx="170.4" cy="50.3" rx="4.6" ry="3.5" transform="rotate(135 170.4 50.3)" fill="url(#gd4)"/><ellipse cx="178.8" cy="49.7" rx="4.2" ry="3.0" transform="rotate(68 178.8 49.7)" fill="url(#gd0)"/><ellipse cx="183.9" cy="49.8" rx="4.3" ry="3.2" transform="rotate(54 183.9 49.8)" fill="url(#gd1)"/><ellipse cx="191.8" cy="50.6" rx="4.0" ry="3.1" transform="rotate(179 191.8 50.6)" fill="url(#gd3)"/><ellipse cx="198.2" cy="50.0" rx="4.4" ry="3.5" transform="rotate(170 198.2 50.0)" fill="url(#gd3)"/><ellipse cx="207.2" cy="50.4" rx="4.1" ry="3.0" transform="rotate(138 207.2 50.4)" fill="url(#gd1)"/><ellipse cx="215.7" cy="50.2" rx="4.3" ry="3.4" transform="rotate(166 215.7 50.2)" fill="url(#gd3)"/><ellipse cx="223.5" cy="49.5" rx="4.5" ry="3.4" transform="rotate(146 223.5 49.5)" fill="url(#gd0)"/><ellipse cx="229.5" cy="49.3" rx="3.6" ry="2.4" transform="rotate(80 229.5 49.3)" fill="url(#gd3)"/><ellipse cx="174.7" cy="57.2" rx="4.2" ry="3.1" transform="rotate(16 174.7 57.2)" fill="url(#gd2)"/><ellipse cx="181.2" cy="54.9" rx="4.3" ry="3.4" transform="rotate(67 181.2 54.9)" fill="url(#gd3)"/><ellipse cx="188.6" cy="55.1" rx="4.6" ry="3.2" transform="rotate(173 188.6 55.1)" fill="url(#gd0)"/><ellipse cx="195.0" cy="55.1" rx="4.4" ry="3.4" transform="rotate(28 195.0 55.1)" fill="url(#gd0)"/><ellipse cx="203.8" cy="55.1" rx="4.6" ry="3.2" transform="rotate(163 203.8 55.1)" fill="url(#gd0)"/><ellipse cx="212.2" cy="57.3" rx="4.5" ry="3.0" transform="rotate(97 212.2 57.3)" fill="url(#gd0)"/><ellipse cx="216.4" cy="56.5" rx="4.0" ry="2.7" transform="rotate(94 216.4 56.5)" fill="url(#gd1)"/><ellipse cx="226.1" cy="56.8" rx="4.0" ry="2.7" transform="rotate(160 226.1 56.8)" fill="url(#gd4)"/><ellipse cx="231.8" cy="57.2" rx="4.3" ry="3.2" transform="rotate(7 231.8 57.2)" fill="url(#gd1)"/><ellipse cx="168.7" cy="61.1" rx="3.8" ry="2.6" transform="rotate(27 168.7 61.1)" fill="url(#gd1)"/><ellipse cx="178.9" cy="62.2" rx="4.1" ry="3.0" transform="rotate(72 178.9 62.2)" fill="url(#gd0)"/><ellipse cx="186.1" cy="62.7" rx="4.0" ry="2.7" transform="rotate(0 186.1 62.7)" fill="url(#gd0)"/><ellipse cx="191.0" cy="61.3" rx="3.9" ry="2.7" transform="rotate(172 191.0 61.3)" fill="url(#gd2)"/><ellipse cx="199.4" cy="62.7" rx="4.0" ry="2.8" transform="rotate(137 199.4 62.7)" fill="url(#gd1)"/><ellipse cx="208.6" cy="62.6" rx="3.8" ry="2.6" transform="rotate(37 208.6 62.6)" fill="url(#gd1)"/><ellipse cx="213.0" cy="61.7" rx="4.2" ry="2.9" transform="rotate(20 213.0 61.7)" fill="url(#gd2)"/><ellipse cx="220.4" cy="61.6" rx="4.1" ry="2.7" transform="rotate(27 220.4 61.6)" fill="url(#gd2)"/><ellipse cx="227.6" cy="61.5" rx="4.6" ry="3.5" transform="rotate(120 227.6 61.5)" fill="url(#gd1)"/><ellipse cx="172.2" cy="69.2" rx="4.2" ry="3.0" transform="rotate(123 172.2 69.2)" fill="url(#gd1)"/><ellipse cx="180.0" cy="66.5" rx="4.0" ry="3.2" transform="rotate(162 180.0 66.5)" fill="url(#gd2)"/><ellipse cx="186.9" cy="68.8" rx="4.4" ry="3.5" transform="rotate(42 186.9 68.8)" fill="url(#gd4)"/><ellipse cx="197.7" cy="66.6" rx="3.7" ry="2.6" transform="rotate(85 197.7 66.6)" fill="url(#gd4)"/><ellipse cx="203.3" cy="68.2" rx="4.1" ry="3.0" transform="rotate(130 203.3 68.2)" fill="url(#gd1)"/><ellipse cx="211.5" cy="68.1" rx="3.9" ry="2.7" transform="rotate(53 211.5 68.1)" fill="url(#gd4)"/><ellipse cx="217.2" cy="68.9" rx="4.5" ry="3.3" transform="rotate(30 217.2 68.9)" fill="url(#gd0)"/><ellipse cx="224.3" cy="68.5" rx="3.7" ry="2.7" transform="rotate(144 224.3 68.5)" fill="url(#gd0)"/><ellipse cx="231.9" cy="68.7" rx="3.9" ry="3.1" transform="rotate(154 231.9 68.7)" fill="url(#gd3)"/><ellipse cx="170.3" cy="72.9" rx="4.0" ry="2.7" transform="rotate(20 170.3 72.9)" fill="url(#gd0)"/><ellipse cx="176.6" cy="73.5" rx="4.3" ry="3.4" transform="rotate(15 176.6 73.5)" fill="url(#gd4)"/><ellipse cx="183.1" cy="74.3" rx="3.8" ry="2.9" transform="rotate(106 183.1 74.3)" fill="url(#gd2)"/><ellipse cx="193.7" cy="73.9" rx="4.5" ry="3.2" transform="rotate(14 193.7 73.9)" fill="url(#gd2)"/><ellipse cx="201.2" cy="73.6" rx="4.1" ry="3.0" transform="rotate(26 201.2 73.6)" fill="url(#gd3)"/><ellipse cx="207.5" cy="74.4" rx="4.1" ry="3.0" transform="rotate(159 207.5 74.4)" fill="url(#gd3)"/><ellipse cx="215.1" cy="74.9" rx="4.3" ry="3.1" transform="rotate(164 215.1 74.9)" fill="url(#gd0)"/><ellipse cx="220.3" cy="75.0" rx="3.6" ry="2.9" transform="rotate(108 220.3 75.0)" fill="url(#gd1)"/><ellipse cx="228.6" cy="73.2" rx="3.8" ry="2.6" transform="rotate(29 228.6 73.2)" fill="url(#gd0)"/><ellipse cx="172.5" cy="80.6" rx="4.1" ry="3.2" transform="rotate(111 172.5 80.6)" fill="url(#gd3)"/><ellipse cx="181.5" cy="79.7" rx="4.1" ry="2.9" transform="rotate(64 181.5 79.7)" fill="url(#gd0)"/><ellipse cx="189.2" cy="80.4" rx="4.4" ry="3.1" transform="rotate(43 189.2 80.4)" fill="url(#gd0)"/><ellipse cx="196.1" cy="80.5" rx="3.7" ry="2.9" transform="rotate(137 196.1 80.5)" fill="url(#gd2)"/><ellipse cx="202.9" cy="80.6" rx="4.1" ry="2.7" transform="rotate(178 202.9 80.6)" fill="url(#gd0)"/><ellipse cx="209.0" cy="79.9" rx="3.8" ry="2.7" transform="rotate(107 209.0 79.9)" fill="url(#gd4)"/><ellipse cx="218.6" cy="79.3" rx="3.8" ry="2.9" transform="rotate(16 218.6 79.3)" fill="url(#gd4)"/><ellipse cx="224.4" cy="80.4" rx="3.8" ry="2.9" transform="rotate(10 224.4 80.4)" fill="url(#gd4)"/><ellipse cx="233.4" cy="81.1" rx="4.3" ry="3.1" transform="rotate(1 233.4 81.1)" fill="url(#gd1)"/><ellipse cx="168.6" cy="86.0" rx="4.0" ry="2.8" transform="rotate(146 168.6 86.0)" fill="url(#gd4)"/><ellipse cx="176.9" cy="86.2" rx="4.5" ry="3.0" transform="rotate(155 176.9 86.2)" fill="url(#gd3)"/><ellipse cx="185.9" cy="86.1" rx="3.7" ry="2.7" transform="rotate(170 185.9 86.1)" fill="url(#gd3)"/><ellipse cx="191.1" cy="85.2" rx="4.1" ry="2.9" transform="rotate(21 191.1 85.2)" fill="url(#gd2)"/><ellipse cx="198.8" cy="85.4" rx="4.4" ry="3.5" transform="rotate(109 198.8 85.4)" fill="url(#gd4)"/><ellipse cx="206.2" cy="86.8" rx="3.7" ry="2.5" transform="rotate(103 206.2 86.8)" fill="url(#gd2)"/><ellipse cx="215.1" cy="85.6" rx="4.5" ry="3.4" transform="rotate(117 215.1 85.6)" fill="url(#gd1)"/><ellipse cx="223.2" cy="85.1" rx="4.5" ry="3.5" transform="rotate(10 223.2 85.1)" fill="url(#gd2)"/><ellipse cx="230.7" cy="85.5" rx="4.2" ry="3.0" transform="rotate(115 230.7 85.5)" fill="url(#gd4)"/><ellipse cx="172.4" cy="91.3" rx="3.8" ry="2.9" transform="rotate(29 172.4 91.3)" fill="url(#gd1)"/><ellipse cx="180.4" cy="92.8" rx="3.8" ry="2.8" transform="rotate(37 180.4 92.8)" fill="url(#gd0)"/><ellipse cx="190.0" cy="90.4" rx="3.9" ry="2.8" transform="rotate(109 190.0 90.4)" fill="url(#gd1)"/><ellipse cx="196.9" cy="91.8" rx="3.8" ry="3.0" transform="rotate(56 196.9 91.8)" fill="url(#gd3)"/><ellipse cx="203.5" cy="92.6" rx="4.1" ry="3.1" transform="rotate(166 203.5 92.6)" fill="url(#gd3)"/><ellipse cx="210.4" cy="92.5" rx="4.1" ry="2.7" transform="rotate(43 210.4 92.5)" fill="url(#gd1)"/><ellipse cx="217.1" cy="90.8" rx="3.7" ry="2.8" transform="rotate(20 217.1 90.8)" fill="url(#gd2)"/><ellipse cx="226.7" cy="92.3" rx="4.6" ry="3.1" transform="rotate(71 226.7 92.3)" fill="url(#gd0)"/><ellipse cx="233.0" cy="91.9" rx="4.1" ry="2.9" transform="rotate(110 233.0 91.9)" fill="url(#gd4)"/><ellipse cx="169.9" cy="97.2" rx="4.5" ry="3.4" transform="rotate(176 169.9 97.2)" fill="url(#gd3)"/><ellipse cx="177.5" cy="96.5" rx="4.3" ry="3.4" transform="rotate(176 177.5 96.5)" fill="url(#gd0)"/><ellipse cx="184.0" cy="97.2" rx="3.8" ry="2.5" transform="rotate(119 184.0 97.2)" fill="url(#gd2)"/><ellipse cx="193.0" cy="98.0" rx="4.5" ry="3.5" transform="rotate(58 193.0 98.0)" fill="url(#gd1)"/><ellipse cx="198.1" cy="97.6" rx="4.5" ry="3.2" transform="rotate(21 198.1 97.6)" fill="url(#gd4)"/><ellipse cx="205.8" cy="98.4" rx="4.5" ry="3.3" transform="rotate(135 205.8 98.4)" fill="url(#gd0)"/><ellipse cx="212.9" cy="96.2" rx="4.5" ry="3.3" transform="rotate(66 212.9 96.2)" fill="url(#gd4)"/><ellipse cx="220.7" cy="96.2" rx="4.4" ry="3.0" transform="rotate(13 220.7 96.2)" fill="url(#gd1)"/><ellipse cx="230.4" cy="96.9" rx="3.8" ry="2.8" transform="rotate(93 230.4 96.9)" fill="url(#gd4)"/><ellipse cx="174.0" cy="104.3" rx="4.1" ry="3.3" transform="rotate(128 174.0 104.3)" fill="url(#gd0)"/><ellipse cx="180.1" cy="103.1" rx="4.1" ry="2.9" transform="rotate(87 180.1 103.1)" fill="url(#gd4)"/><ellipse cx="189.0" cy="104.5" rx="3.8" ry="2.7" transform="rotate(0 189.0 104.5)" fill="url(#gd2)"/><ellipse cx="196.6" cy="102.9" rx="4.1" ry="3.1" transform="rotate(65 196.6 102.9)" fill="url(#gd0)"/><ellipse cx="203.4" cy="104.6" rx="3.8" ry="2.9" transform="rotate(51 203.4 104.6)" fill="url(#gd4)"/><ellipse cx="210.2" cy="103.3" rx="3.9" ry="3.0" transform="rotate(57 210.2 103.3)" fill="url(#gd0)"/><ellipse cx="217.2" cy="104.4" rx="4.2" ry="3.1" transform="rotate(161 217.2 104.4)" fill="url(#gd3)"/><ellipse cx="224.9" cy="102.6" rx="4.5" ry="3.1" transform="rotate(91 224.9 102.6)" fill="url(#gd3)"/><ellipse cx="233.2" cy="103.3" rx="3.7" ry="2.6" transform="rotate(167 233.2 103.3)" fill="url(#gd1)"/><ellipse cx="168.6" cy="110.0" rx="3.7" ry="2.7" transform="rotate(49 168.6 110.0)" fill="url(#gd3)"/><ellipse cx="179.1" cy="108.5" rx="3.7" ry="2.6" transform="rotate(41 179.1 108.5)" fill="url(#gd2)"/><ellipse cx="184.4" cy="109.2" rx="3.8" ry="3.0" transform="rotate(35 184.4 109.2)" fill="url(#gd2)"/><ellipse cx="191.5" cy="108.3" rx="4.3" ry="3.4" transform="rotate(112 191.5 108.3)" fill="url(#gd3)"/><ellipse cx="199.0" cy="110.4" rx="3.7" ry="2.8" transform="rotate(81 199.0 110.4)" fill="url(#gd2)"/><ellipse cx="208.5" cy="108.5" rx="4.5" ry="3.5" transform="rotate(80 208.5 108.5)" fill="url(#gd4)"/><ellipse cx="213.3" cy="109.6" rx="3.7" ry="2.7" transform="rotate(78 213.3 109.6)" fill="url(#gd3)"/><ellipse cx="222.4" cy="108.1" rx="4.3" ry="3.0" transform="rotate(147 222.4 108.1)" fill="url(#gd2)"/><ellipse cx="230.0" cy="108.3" rx="3.9" ry="3.0" transform="rotate(176 230.0 108.3)" fill="url(#gd0)"/></g><g font-family="Liberation Serif" fill="#222" stroke="#222" stroke-width="0.12" text-anchor="middle"><text x="27.4" y="-6.6" font-size="6.1">Light Roast</text><text x="85.1" y="-6.6" font-size="6.1">Medium Roast</text><text x="141.8" y="-6.6" font-size="6.1">Medium Dark Roast</text><text x="197.2" y="-6.6" font-size="6.1">Dark Roast</text></g><g id="caps" font-family="Liberation Serif" fill="#222" stroke="#222" stroke-width="0.1" text-anchor="middle" font-size="5.5"><text x="27.4" y="119.8">internal</text><text x="27.4" y="128.3">temperature</text><text x="27.4" y="137.1">of around 356°F</text><text x="27.4" y="145">(180°C)</text><text x="85.1" y="119.8">internal</text><text x="85.1" y="128.3">temperature of</text><text x="85.1" y="137.1">around 410°F</text><text x="85.1" y="145">(210°C)</text><text x="141.8" y="119.8">internal</text><text x="141.8" y="128.3">temperature of</text><text x="141.8" y="137.1">around 437°F</text><text x="141.8" y="145">(225°C)</text><text x="197.2" y="119.8">internal</text><text x="197.2" y="128.3">temperature of</text><text x="197.2" y="137.1">around 464°F</text><text x="197.2" y="145">(240°C)</text></g></g></defs></svg>
<!-- top line -->

<div class="t" style="left:13px;top:7.4px;font-size:22px;color:#1d1d1f;-webkit-text-stroke:0.2px #1d1d1f">Edit Article</div>
<div class="t" style="left:13px;top:52.5px;font-size:12.4px;color:#2b2b2b">Do you need help creating a knowledge article? <span style="color:#2a3a8e;text-decoration:underline">Learn how to create one.</span></div>

<!-- buttons -->
<div class="btn" style="left:959px;width:67px;background:#e7e9f8"></div>
<div class="t b" style="left:959px;width:67px;text-align:center;top:28.9px;font-size:10.8px;color:#2540a0">Close</div>
<div class="btn" style="left:1039px;width:115px;background:#c7cfe7"></div>
<div class="a" style="left:1124px;top:20px;width:1.3px;height:29px;background:#fff"></div>
<div class="t b" style="left:1039px;width:85px;text-align:center;top:28.9px;font-size:10.8px;color:#fff">Save</div>
<svg style="left:1134px;top:31px" width="10" height="6" viewBox="0 0 10 6"><path d="M0.5 0.5L5 5L9.5 0.5" fill="none" stroke="#fff" stroke-width="1.2"/></svg>
<div class="btn" style="left:1167px;width:115px;background:#c7cfe7"></div>
<div class="a" style="left:1252px;top:20px;width:1.3px;height:29px;background:#fff"></div>
<div class="t b" style="left:1167px;width:85px;text-align:center;top:28.9px;font-size:10.8px;color:#fff">Publish</div>
<svg style="left:1262px;top:31px" width="10" height="6" viewBox="0 0 10 6"><path d="M0.5 0.5L5 5L9.5 0.5" fill="none" stroke="#fff" stroke-width="1.2"/></svg>

<!-- ============ card 1 ============ -->
<div class="card" style="left:14px;top:95px;width:900px;height:343px"></div>
<div class="t" style="left:36px;top:116.6px;font-size:17px;color:#2b2b2b">Set up the Article</div>
<div class="t" style="left:36px;width:285px;text-align:center;top:165.5px;font-size:11.2px;color:#333">Details</div>
<div class="t" style="left:321px;width:285px;text-align:center;top:165.5px;font-size:11.2px;color:#333">Phrasings(0)</div>
<div class="t" style="left:606px;width:285px;text-align:center;top:165.5px;font-size:11.2px;color:#333">Revisions</div>
<div class="a" style="left:36px;top:189px;width:855px;height:2px;background:#dadeeb"></div>
<div class="a" style="left:36px;top:187.7px;width:285px;height:1.5px;border-radius:1px;background:#1f3580"></div>

<div class="t b" style="left:36px;top:208.3px;font-size:10.8px;color:#333">Title</div><div class="t b" style="left:61.8px;top:206.3px;font-size:14px;color:#f0603a">*</div>
<svg style="left:70px;top:206px" width="12" height="12" viewBox="0 0 12 12"><circle cx="6" cy="6" r="5" fill="none" stroke="#333" stroke-width="1"/><circle cx="6" cy="3.6" r="0.8" fill="#333"/><path d="M5 5.3h1.2v3.3M4.9 8.6h2.4" stroke="#333" stroke-width="1" fill="none"/></svg>
<div class="inp" style="left:36px;top:225px;width:405px;height:29px"></div>
<div class="t" style="left:50px;top:233.6px;font-size:11.15px;color:#333">Coffee roasts</div>
<svg style="left:417.5px;top:235px" width="9" height="9" viewBox="0 0 9 9"><path d="M0.4 0.4L8.6 8.6M8.6 0.4L0.4 8.6" stroke="#4a4a4a" stroke-width="1.15"/></svg>

<div class="t b" style="left:36px;top:279.8px;font-size:11px;color:#333">Category</div>
<div class="inp" style="left:36px;top:297px;width:405px;height:29px"></div>
<div class="t" style="left:48px;top:305.2px;font-size:11.4px;color:#666">Brewing guides</div>
<svg style="left:417.5px;top:308.5px" width="9" height="6" viewBox="0 0 9 6"><path d="M0.5 0.5L4.5 4.8L8.5 0.5" fill="none" stroke="#666" stroke-width="1.05"/></svg>

<div class="t b" style="left:36px;top:342.5px;font-size:11px;color:#333">Labels</div>
<div class="inp" style="left:36px;top:360px;width:405px;height:29px"></div>
<div class="t" style="left:48px;top:368.3px;font-size:11.4px;color:#666">beans</div>
<div class="a" style="left:368px;top:365px;width:44px;height:18px;border-radius:9px;background:#dee2ee"></div>
<div class="t" style="left:379px;top:368px;font-size:12px;color:#222">1</div>
<svg style="left:392.5px;top:369px" width="10" height="10" viewBox="0 0 10 10"><path d="M0.5 0.5L9.5 9.5M9.5 0.5L0.5 9.5" stroke="#222" stroke-width="1.4"/></svg>
<svg style="left:417.5px;top:371.5px" width="9" height="6" viewBox="0 0 9 6"><path d="M0.5 0.5L4.5 4.8L8.5 0.5" fill="none" stroke="#666" stroke-width="1.05"/></svg>
<div class="a" style="left:36px;top:393px;width:68px;height:18px;border-radius:9px;background:#1f3773"></div>
<div class="t b" style="left:47.3px;top:397.4px;font-size:10.6px;color:#fff">beans</div>
<svg style="left:84.5px;top:397.5px" width="9" height="9" viewBox="0 0 9 9"><path d="M0.5 0.5L8.5 8.5M8.5 0.5L0.5 8.5" stroke="#fff" stroke-width="1.3"/></svg>

<!-- meta panel -->
<div class="a" style="left:459px;top:205px;width:436px;height:214px;background:#f4f5f8;border-radius:6px;border-right:3px solid #0e6a45;border-bottom:3px solid #0e6a45"></div>
<div class="t b" style="left:472.5px;top:224.9px;font-size:11px;color:#333">Knowledge base</div>
<div class="t" style="left:472.5px;top:240.2px;font-size:12.7px;color:#333">Coffee</div>
<div class="t b" style="left:472.5px;top:271.7px;font-size:11px;color:#333">Language</div>
<div class="t" style="left:472.5px;top:286.8px;font-size:12.7px;color:#333">English United States (en-US)</div>
<div class="t b" style="left:472.5px;top:321.7px;font-size:11px;color:#333">Date Created</div>
<div class="t" style="left:472.5px;top:336.2px;font-size:12.7px;color:#333">Sep 24, 2025, 08:40:25 AM</div>
<div class="t b" style="left:472.5px;top:366.7px;font-size:11px;color:#333">Date Modified</div>
<div class="t" style="left:472.5px;top:382px;font-size:12.7px;color:#333">Sep 24, 2025, 08:40:27 AM</div>

<div class="t b" style="left:715.3px;top:224.8px;font-size:11px;color:#333">Visibility</div>
<div class="a" style="left:717px;top:241px;width:29px;height:14px;border-radius:7px;background:#2540a0"></div>
<div class="a" style="left:732px;top:242px;width:12px;height:12px;border-radius:6px;background:#fff"></div>
<svg style="left:734.5px;top:245px" width="7" height="6" viewBox="0 0 7 6"><path d="M0.8 3L2.6 4.8L6.2 1" fill="none" stroke="#2540a0" stroke-width="1"/></svg>
<div class="t" style="left:755px;top:242.8px;font-size:10.9px;color:#333">On</div>
<div class="t b" style="left:715.3px;top:271.7px;font-size:11px;color:#333">Feedback</div>
<svg style="left:772.5px;top:271px" width="12" height="12" viewBox="0 0 12 12"><circle cx="6" cy="6" r="5" fill="none" stroke="#333" stroke-width="1"/><circle cx="6" cy="3.6" r="0.8" fill="#333"/><path d="M5 5.3h1.2v3.3M4.9 8.6h2.4" stroke="#333" stroke-width="1" fill="none"/></svg>
<div class="a" style="left:715px;top:285px;width:38px;height:21px;border-radius:10.5px;background:#cfeee3"></div>
<div class="t b" style="left:715px;width:38px;text-align:center;top:290px;font-size:10.5px;color:#333">--%</div>
<div class="t b" style="left:715.3px;top:321.7px;font-size:11px;color:#333">Created By</div>
<div class="a" style="left:695px;top:334px;width:111px;height:27px;border-radius:4px;background:linear-gradient(90deg,#eef0f3 0%,#e2e3e6 14%,#dcdde0 35%,#dfe0e3 70%,#e6e7ea 100%)"></div>
<div class="t b" style="left:715.3px;top:366.7px;font-size:11px;color:#333">Status</div>
<div class="t" style="left:715.3px;top:382px;font-size:12.7px;color:#0f7a4e">Published</div>

<!-- ============ card 2 ============ -->
<div class="card" style="left:14px;top:461px;width:900px;height:400px"></div>
<div class="t" style="left:36.5px;top:482.8px;font-size:17.2px;color:#2b2b2b">Content for the Answer</div>
<svg style="left:216.5px;top:484px" width="13" height="13" viewBox="0 0 13 13"><circle cx="6.5" cy="6.5" r="5.6" fill="none" stroke="#333" stroke-width="1"/><circle cx="6.5" cy="3.9" r="0.8" fill="#333"/><path d="M5.4 5.7h1.3v3.5M5.3 9.2h2.6" stroke="#333" stroke-width="1" fill="none"/></svg>

<!-- editor tabs -->
<div class="a" style="left:36px;top:510px;width:855px;height:36px;background:#f3f4f9"></div>
<div class="a" style="left:36px;top:510px;width:137px;height:36.6px;background:#fff;border-bottom:1.6px solid #1f3585"></div>
<div class="a" style="left:172.5px;top:513px;width:1px;height:33px;background:#dde0ea"></div>
<div class="t" style="left:47.5px;top:522.2px;font-size:11.4px;color:#333">Default</div>
<svg style="left:150px;top:519px" width="8" height="16" viewBox="0 0 8 16"><circle cx="4.2" cy="4" r="1.45" fill="#1f3a9a"/><circle cx="4.2" cy="8.2" r="1.45" fill="#1f3a9a"/><circle cx="4.2" cy="12.2" r="1.45" fill="#1f3a9a"/></svg>
<svg style="left:185px;top:521px" width="12" height="12" viewBox="0 0 12 12"><path d="M6 0.5V11.5M0.5 6H11.5" stroke="#2540a0" stroke-width="1.4"/></svg>

<!-- editor frame -->
<div class="a" style="left:36px;top:547px;width:855px;height:300px;border-left:1px solid #e6e7ea;border-right:1px solid #e6e7ea"></div>
<div class="a" style="left:37px;top:547px;width:853px;height:45px;background:#fff;box-shadow:0 3px 4px rgba(0,0,0,0.06)"></div>
<div class="a" style="left:47px;top:589px;width:833px;height:1px;background:#e2e4e8"></div>
<!-- dropdowns -->
<div class="a" style="left:48px;top:559px;width:117px;height:26px;border-radius:4px;background:#f3f4f6"></div>
<div class="t" style="left:55.5px;top:566.8px;font-size:12px;color:#333">Paragraph</div>
<svg style="left:149px;top:569px" width="9" height="6" viewBox="0 0 9 6"><path d="M0.5 0.5L4.5 5L8.5 0.5" fill="none" stroke="#7c8596" stroke-width="1.2"/></svg>
<div class="a" style="left:169px;top:559px;width:117px;height:26px;border-radius:4px;background:#f3f4f6"></div>
<div class="t" style="left:177px;top:567.5px;font-size:12.7px;color:#333">Medium</div>
<svg style="left:271px;top:569px" width="9" height="6" viewBox="0 0 9 6"><path d="M0.5 0.5L4.5 5L8.5 0.5" fill="none" stroke="#7c8596" stroke-width="1.2"/></svg>
<!-- font color -->
<svg style="left:298px;top:566px" width="10" height="10" viewBox="0 0 10 10"><path d="M0.9 9.2L3.3 0.8H5.9L8.3 9.2M2 6H7.2" fill="none" stroke="#1f2d3d" stroke-width="1.6" stroke-linejoin="round" stroke-linecap="round"/></svg>
<div class="a" style="left:294.7px;top:577.1px;width:16.3px;height:2.8px;background:#000"></div>
<svg style="left:320px;top:568.7px" width="9" height="6" viewBox="0 0 9 6"><path d="M0.5 0.5L4.5 5L8.5 0.5" fill="none" stroke="#8a94a6" stroke-width="1.2"/></svg>
<!-- highlighter -->
<svg style="left:340px;top:564.5px" width="14" height="12" viewBox="0 0 14 12"><path d="M9.3 0.4Q10 -0.2 10.7 0.4L13.5 3.2Q14.1 3.9 13.5 4.6L10.6 7.5L6.3 3.2Z" fill="#1f2d3d"/><path d="M5.5 4L9.8 8.3L7.6 10.5H4.6L3.9 11.3H0L2.9 8.3L2.7 6.8Z" fill="#1f2d3d"/></svg>
<div class="a" style="left:339.9px;top:577.3px;width:16.1px;height:2.7px;background:#000"></div>
<svg style="left:366px;top:568.7px" width="9" height="6" viewBox="0 0 9 6"><path d="M0.5 0.5L4.5 5L8.5 0.5" fill="none" stroke="#8a94a6" stroke-width="1.2"/></svg>
<div class="a" style="left:390px;top:554px;width:1px;height:35px;background:#dcdde2"></div>
<!-- B I U S -->
<svg style="left:410px;top:564px" width="14" height="16" viewBox="0 0 14 16"><path d="M0.4 0.8H7.2A3.35 3.35 0 0 1 7.2 7.5H2.1M2.1 7.5H7.9A3.75 3.75 0 0 1 7.9 15H0.4M2.1 0.8V15" fill="none" stroke="#2d3748" stroke-width="1.55"/></svg>
<svg style="left:441px;top:564px" width="14" height="16" viewBox="0 0 14 16"><path d="M4.6 0.8H13.2M0.6 15H9.2M10.6 0.8L6.2 15" fill="none" stroke="#2d3748" stroke-width="1.55"/></svg>
<svg style="left:472px;top:564px" width="16" height="16" viewBox="0 0 16 16"><path d="M0.8 0.8H5M11 0.8H15.2M2.9 0.8V6.8A5.1 5.1 0 0 0 13.1 6.8V0.8M0.5 14.9H15.6" fill="none" stroke="#2d3748" stroke-width="1.55"/></svg>
<svg style="left:502px;top:564px" width="18" height="16" viewBox="0 0 18 16"><path d="M0 8H18" stroke="#2d3748" stroke-width="1.5"/><path d="M13.6 2.2C12.4 0.7 9.6 0.4 7.5 1.1C5 2 4.3 4.6 6.4 6.2M12.6 9.6C14.2 11 13.9 13.6 11.2 14.5C9.2 15.1 6.5 14.9 4.8 13.6" fill="none" stroke="#2d3748" stroke-width="1.55"/></svg>
<div class="a" style="left:538px;top:554px;width:1px;height:35px;background:#dcdde2"></div>
<!-- align / lists -->
<svg style="left:557px;top:564px" width="16" height="17" viewBox="0 0 16 17"><path d="M0 1.5H12M0 6H15.5M0 10.5H10M0 15H15.5" stroke="#2d3748" stroke-width="1.6"/></svg>
<svg style="left:588.5px;top:564px" width="18" height="17" viewBox="0 0 18 17"><circle cx="1.3" cy="1.8" r="1.3" fill="#2d3748"/><circle cx="1.3" cy="8.3" r="1.3" fill="#2d3748"/><circle cx="1.3" cy="14.8" r="1.3" fill="#2d3748"/><path d="M5 1.8H17.5M5 8.3H17.5M5 14.8H17.5" stroke="#2d3748" stroke-width="1.7"/></svg>
<svg style="left:615px;top:569px" width="9" height="6" viewBox="0 0 9 6"><path d="M0.5 0.5L4.5 5L8.5 0.5" fill="none" stroke="#8a94a6" stroke-width="1.2"/></svg>
<svg style="left:635.5px;top:564px" width="16" height="17" viewBox="0 0 16 17"><text x="0" y="7" font-size="7.5" font-weight="bold" fill="#2d3748" font-family="Liberation Sans">1</text><text x="0" y="16" font-size="7.5" font-weight="bold" fill="#2d3748" font-family="Liberation Sans">2</text><path d="M5.5 2H15.5M5.5 8.3H15.5M5.5 14.8H15.5" stroke="#2d3748" stroke-width="1.7"/></svg>
<svg style="left:661px;top:569px" width="9" height="6" viewBox="0 0 9 6"><path d="M0.5 0.5L4.5 5L8.5 0.5" fill="none" stroke="#8a94a6" stroke-width="1.2"/></svg>
<div class="a" style="left:684px;top:554px;width:1px;height:35px;background:#dcdde2"></div>
<!-- image / film / link / table -->
<svg style="left:702px;top:564px" width="18" height="16" viewBox="0 0 18 16"><rect x="0.8" y="0.8" width="16.2" height="14.2" rx="1.8" fill="none" stroke="#2d3748" stroke-width="1.6"/><circle cx="5.2" cy="4.6" r="1.4" fill="#2d3748"/><path d="M1 15L4.8 10L6.6 11.6L11.1 6.6L16.8 14V15Z" fill="#2d3748"/></svg>
<svg style="left:734px;top:564.2px" width="18.2" height="15.6" viewBox="0 0 18.2 15.6"><rect x="0" y="0" width="18.2" height="15.6" rx="2.4" fill="#000"/><rect x="5.5" y="2.1" width="7.1" height="4.4" rx="1" fill="#fff"/><rect x="5.5" y="8.9" width="7.1" height="4.5" rx="1" fill="#fff"/><rect x="1.6" y="2.2" width="2.3" height="2.2" rx="0.6" fill="#fff"/><rect x="1.6" y="6.8" width="2.3" height="2.2" rx="0.6" fill="#fff"/><rect x="1.6" y="11.4" width="2.3" height="2.2" rx="0.6" fill="#fff"/><rect x="14.2" y="2.2" width="2.3" height="2.2" rx="0.6" fill="#fff"/><rect x="14.2" y="6.8" width="2.3" height="2.2" rx="0.6" fill="#fff"/><rect x="14.2" y="11.4" width="2.3" height="2.2" rx="0.6" fill="#fff"/></svg>
<svg style="left:765px;top:566.5px" width="18" height="11" viewBox="0 0 18 11"><path d="M4.00 1.00H7.20A3.0 3.0 0 0 1 7.20 7.00H4.00A3.0 3.0 0 0 1 4.00 1.00Z" transform="rotate(14 5.6 4.0)" fill="none" stroke="#2d3748" stroke-width="1.8" stroke-dasharray="16.12 2.6 99"/><path d="M10.70 3.80H13.90A3.0 3.0 0 0 1 13.90 9.80H10.70A3.0 3.0 0 0 1 10.70 3.80Z" transform="rotate(14 12.3 6.8)" fill="none" stroke="#2d3748" stroke-width="1.8" stroke-dasharray="3.70 2.6 99"/></svg>
<svg style="left:794px;top:563px" width="18" height="18" viewBox="0 0 18 18"><rect x="0" y="0" width="18" height="18" rx="2.2" fill="#2d3748"/><rect x="2" y="4.5" width="6" height="5" fill="#fff"/><rect x="10" y="4.5" width="6" height="5" fill="#fff"/><rect x="2" y="11.3" width="6" height="4.7" fill="#fff"/><rect x="10" y="11.3" width="6" height="4.7" fill="#fff"/></svg>
<svg style="left:815px;top:569px" width="9" height="6" viewBox="0 0 9 6"><path d="M0.5 0.5L4.5 5L8.5 0.5" fill="none" stroke="#8a94a6" stroke-width="1.2"/></svg>

<!-- editor content -->
<div class="t" style="left:52px;top:614px;font-size:14.2px;color:#111">Most roasters have specialized names for their favored roasts and there is very little industry standardization. This can cause some</div>
<div class="t" style="left:52px;top:634.6px;font-size:14.2px;color:#111;letter-spacing:0.14px">confusion when you're buying, but in general, roasts fall into one of four color categories — <b>light, medium, medium-dark and</b></div>

<svg style="left:101.6px;top:683.2px" width="358" height="130"><use href="#coffee" transform="scale(1.563)"/></svg>
<!-- right panel -->
<div class="card" style="left:935px;top:67px;width:400px;height:648px"></div>
<div class="card" style="left:958px;top:89px;width:331px;height:604px;border-radius:7px"></div><div class="a" style="left:958px;top:89px;width:331px;height:58px;background:#d4dff6;border-radius:7px 7px 0 0"></div>
<div class="t" style="left:972.5px;top:109.2px;font-size:16.2px;color:#1d1d1f;-webkit-text-stroke:0.25px #1d1d1f">Test Articles</div>
<svg style="left:1213.5px;top:111px" width="15" height="14" viewBox="0 0 15 14"><path d="M0.8 0.8H14.2L9 6.8V12.8L6 11V6.8Z" fill="none" stroke="#2540a0" stroke-width="1.3" stroke-linejoin="round"/></svg>
<div class="t b" style="left:1235.5px;top:113.8px;font-size:11.3px;color:#2540a0">Filter</div>
<div class="a" style="left:1133px;top:161px;width:148px;height:33px;border:1px solid #c3c8d6;border-radius:10px;background:#fff"></div>
<div class="t" style="left:1149.5px;top:172.6px;font-size:11.45px;color:#444">picture of coffee roasts</div>
<div class="a" style="left:966px;top:201px;width:283px;height:345px;border:1px solid #c3c8d6;border-radius:8px;background:#fff"></div>
<div class="a" style="left:1204.2px;top:215px;width:6.8px;height:6.8px;border-radius:4px;background:#0e6a45"></div>
<div class="t" style="left:1212.2px;top:212.8px;font-size:11px;color:#444">92%</div>
<div class="a" style="left:981.5px;top:231px;width:250px;font-size:11.3px;line-height:16.2px;color:#555;white-space:nowrap">Most roasters have specialized names for their<br>favored roasts and there is very little industry<br>standardization. This can cause some confusion<br>when you're buying, but in general, roasts fall<br>into one of four color categories — <b>light,</b><br><b>medium, medium-dark and dark</b>.</div>
<svg style="left:991.5px;top:348.6px" width="229" height="150"><use href="#coffee"/></svg>
<div class="t" style="left:981.7px;top:524.8px;font-size:10.4px;color:#2540a0;text-decoration:underline">Read Less</div>
<div class="a" style="left:959px;top:641px;width:329px;height:1px;background:#c6cadb"></div>
<div class="t" style="left:975.4px;top:661.7px;font-size:11.25px;color:#8a8a8a">Type message here and press return key</div>
<svg style="left:1255.5px;top:659.5px" width="15" height="15" viewBox="0 0 15 15"><path d="M3.2 4.2A5.8 5.8 0 1 1 1.7 8.3" fill="none" stroke="#111" stroke-width="1.5"/><path d="M1 1.6V5.4H4.8" fill="none" stroke="#111" stroke-width="1.5" stroke-linejoin="miter"/></svg>

<!-- scrollbars -->
<div class="a" style="left:1298px;top:2px;width:9px;height:791px;background:#f1f1f1"></div>
<div class="a" style="left:1298px;top:11px;width:9px;height:462px;background:#888;border-radius:5px"></div>
<div class="a" style="left:0;top:793px;width:1298px;height:15px;background:#f1f1f1"></div>
<div class="a" style="left:0;top:793px;width:1290px;height:15px;background:#888;border-radius:7px"></div>
<div class="a" style="left:0;top:0;width:1307px;height:1px;background:#f8f8fe"></div>
<div class="a" style="left:0;top:1px;width:1307px;height:1px;background:#cccccc"></div>
</body></html>
